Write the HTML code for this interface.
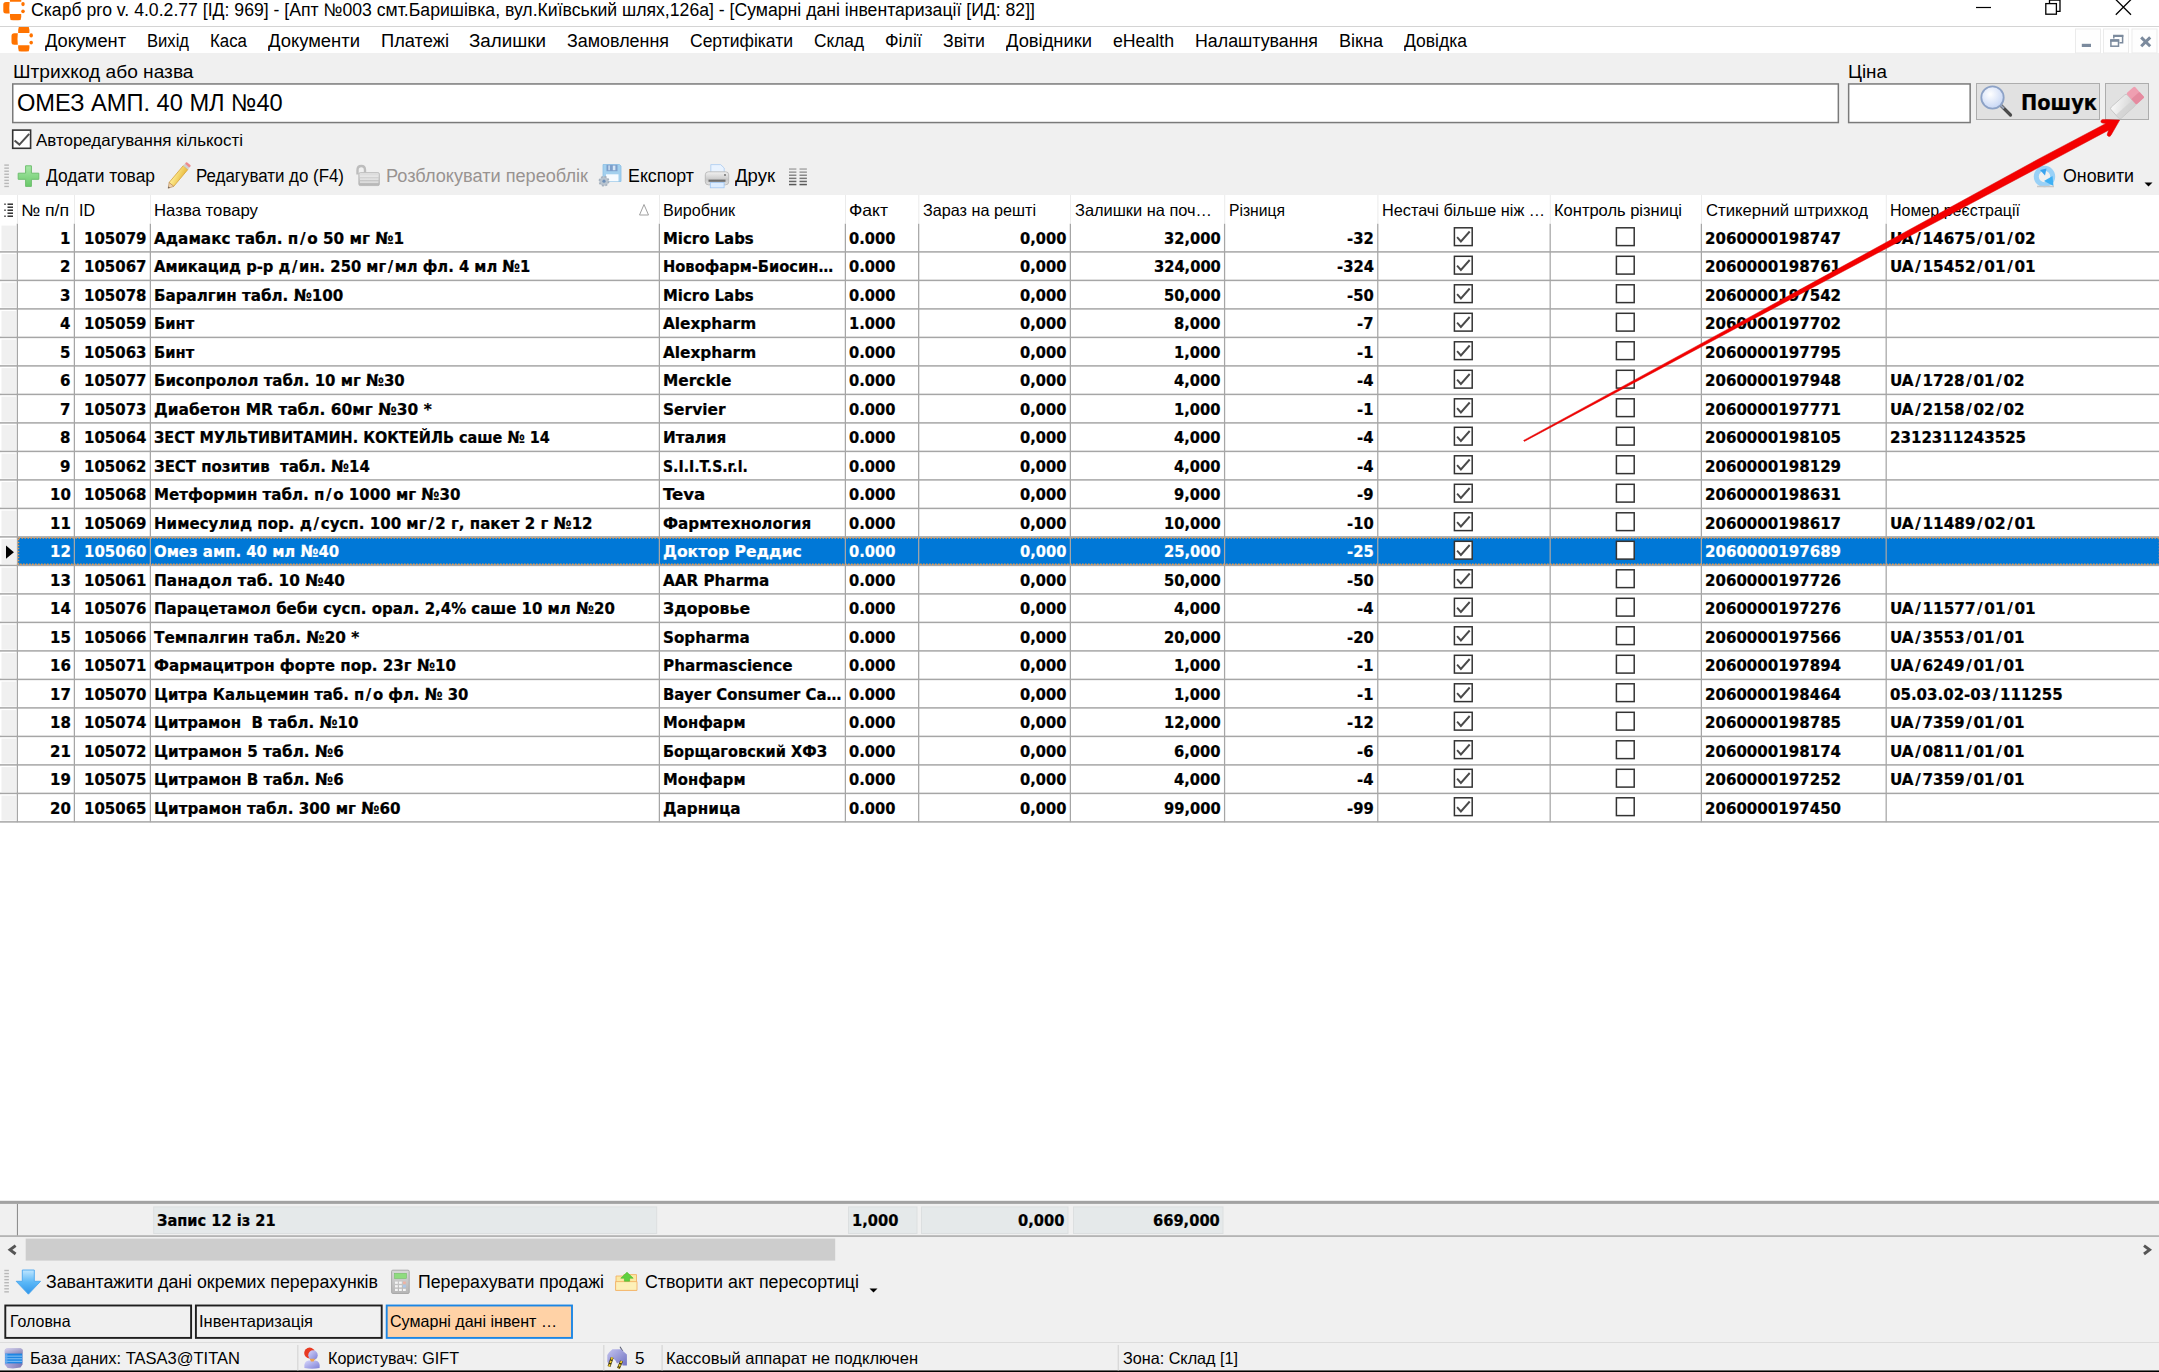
<!DOCTYPE html>
<html lang="uk"><head><meta charset="utf-8"><title>Скарб pro</title><style>html,body{margin:0;padding:0;background:#f0f0f0;overflow:hidden}
#r{position:relative;width:2159px;height:1372px;overflow:hidden;background:#f0f0f0}
#r>div{position:absolute}
#r>svg{position:absolute;left:0;top:0}
.t{position:absolute;white-space:pre;transform-origin:0 0;}
.sl{padding:0 1.6px;font-weight:inherit}
.b{-webkit-text-stroke:0.22px currentColor}
</style></head><body><div id="r">
<div style="left:0px;top:0px;width:2159px;height:1372px;background:#f0f0f0;"></div>
<div style="left:0px;top:0px;width:2159px;height:26px;background:#ffffff;"></div>
<div style="left:0px;top:26px;width:2159px;height:1px;background:#d4d4d4;"></div>
<div style="left:0px;top:27px;width:2159px;height:26px;background:#ffffff;"></div>
<div style="left:1976px;top:83px;width:124px;height:37px;background:#e1e1e1;border:1px solid #adadad;box-sizing:border-box;"></div>
<div style="left:2105px;top:83px;width:44px;height:37px;background:#e1e1e1;border:1px solid #adadad;box-sizing:border-box;"></div>
<div style="left:0px;top:195px;width:2159px;height:1006px;background:#ffffff;"></div>
<div style="left:0px;top:1204px;width:2159px;height:32px;background:#f0f0f0;"></div>
<div style="left:0px;top:1238px;width:2159px;height:24px;background:#f0f0f0;"></div>
<div style="left:0px;top:1342px;width:2159px;height:1px;background:#dcdcdc;"></div>
<svg width="2159" height="1372" viewBox="0 0 2159 1372"><rect x="12.75" y="83.95" width="1825.6" height="38.6" fill="#fff" stroke="#7a7a7a" stroke-width="1.5"/><rect x="1848.65" y="83.95" width="121.5" height="38.6" fill="#fff" stroke="#7a7a7a" stroke-width="1.5"/><rect x="12.7" y="130.1" width="17.9" height="18.2" fill="#fff" stroke="#333" stroke-width="1.6"/><path d="M14.6 140.4 L19.4 144.6 L29.2 133.8" fill="none" stroke="#505050" stroke-width="2"/><rect x="4.3" y="164.4" width="4.6" height="1.4" fill="#b8b8b8" /><rect x="4.3" y="167.45000000000002" width="4.6" height="1.4" fill="#b8b8b8" /><rect x="4.3" y="170.5" width="4.6" height="1.4" fill="#b8b8b8" /><rect x="4.3" y="173.55" width="4.6" height="1.4" fill="#b8b8b8" /><rect x="4.3" y="176.6" width="4.6" height="1.4" fill="#b8b8b8" /><rect x="4.3" y="179.65" width="4.6" height="1.4" fill="#b8b8b8" /><rect x="4.3" y="182.7" width="4.6" height="1.4" fill="#b8b8b8" /><rect x="4.3" y="185.75" width="4.6" height="1.4" fill="#b8b8b8" /><rect x="17" y="195" width="1" height="28.400000000000006" fill="#ebebeb" /><rect x="74" y="195" width="1" height="28.400000000000006" fill="#ebebeb" /><rect x="150" y="195" width="1" height="28.400000000000006" fill="#ebebeb" /><rect x="659" y="195" width="1" height="28.400000000000006" fill="#ebebeb" /><rect x="845" y="195" width="1" height="28.400000000000006" fill="#ebebeb" /><rect x="918.3" y="195" width="1" height="28.400000000000006" fill="#ebebeb" /><rect x="1070" y="195" width="1" height="28.400000000000006" fill="#ebebeb" /><rect x="1224.2" y="195" width="1" height="28.400000000000006" fill="#ebebeb" /><rect x="1377.4" y="195" width="1" height="28.400000000000006" fill="#ebebeb" /><rect x="1549.8" y="195" width="1" height="28.400000000000006" fill="#ebebeb" /><rect x="1701" y="195" width="1" height="28.400000000000006" fill="#ebebeb" /><rect x="1885.8" y="195" width="1" height="28.400000000000006" fill="#ebebeb" /><path d="M639.5 215 L644 204.5 L648.5 215 Z" fill="#fff" stroke="#a0a0a0" stroke-width="1"/><rect x="7.5" y="203.5" width="5.5" height="1.4" fill="#222" /><rect x="4.3" y="203.5" width="1.4" height="1.4" fill="#222" /><rect x="7.5" y="206.5" width="5.5" height="1.4" fill="#222" /><rect x="7.5" y="209.5" width="5.5" height="1.4" fill="#222" /><rect x="4.3" y="209.5" width="1.4" height="1.4" fill="#222" /><rect x="7.5" y="212.5" width="5.5" height="1.4" fill="#222" /><rect x="7.5" y="215.5" width="5.5" height="1.4" fill="#222" /><rect x="4.3" y="215.5" width="1.4" height="1.4" fill="#222" /><rect x="18" y="537.5" width="2141" height="27.3" fill="#0078d7" /><rect x="1.5" y="225.6" width="14.7" height="24.9" fill="#f0f0f0" /><rect x="1.5" y="254.1" width="14.7" height="24.9" fill="#f0f0f0" /><rect x="1.5" y="282.59999999999997" width="14.7" height="24.9" fill="#f0f0f0" /><rect x="1.5" y="311.09999999999997" width="14.7" height="24.9" fill="#f0f0f0" /><rect x="1.5" y="339.59999999999997" width="14.7" height="24.9" fill="#f0f0f0" /><rect x="1.5" y="368.09999999999997" width="14.7" height="24.9" fill="#f0f0f0" /><rect x="1.5" y="396.59999999999997" width="14.7" height="24.9" fill="#f0f0f0" /><rect x="1.5" y="425.09999999999997" width="14.7" height="24.9" fill="#f0f0f0" /><rect x="1.5" y="453.59999999999997" width="14.7" height="24.9" fill="#f0f0f0" /><rect x="1.5" y="482.09999999999997" width="14.7" height="24.9" fill="#f0f0f0" /><rect x="1.5" y="510.59999999999997" width="14.7" height="24.9" fill="#f0f0f0" /><rect x="1.5" y="539.1" width="14.7" height="24.9" fill="#f0f0f0" /><rect x="1.5" y="567.6" width="14.7" height="24.9" fill="#f0f0f0" /><rect x="1.5" y="596.1" width="14.7" height="24.9" fill="#f0f0f0" /><rect x="1.5" y="624.6" width="14.7" height="24.9" fill="#f0f0f0" /><rect x="1.5" y="653.1" width="14.7" height="24.9" fill="#f0f0f0" /><rect x="1.5" y="681.6" width="14.7" height="24.9" fill="#f0f0f0" /><rect x="1.5" y="710.1" width="14.7" height="24.9" fill="#f0f0f0" /><rect x="1.5" y="738.6" width="14.7" height="24.9" fill="#f0f0f0" /><rect x="1.5" y="767.1" width="14.7" height="24.9" fill="#f0f0f0" /><rect x="1.5" y="795.6" width="14.7" height="24.9" fill="#f0f0f0" /><rect x="0" y="251.15" width="2159" height="1.5" fill="#a6a6a6" /><rect x="0" y="279.65" width="2159" height="1.5" fill="#a6a6a6" /><rect x="0" y="308.15" width="2159" height="1.5" fill="#a6a6a6" /><rect x="0" y="336.65" width="2159" height="1.5" fill="#a6a6a6" /><rect x="0" y="365.15" width="2159" height="1.5" fill="#a6a6a6" /><rect x="0" y="393.65" width="2159" height="1.5" fill="#a6a6a6" /><rect x="0" y="422.15" width="2159" height="1.5" fill="#a6a6a6" /><rect x="0" y="450.65" width="2159" height="1.5" fill="#a6a6a6" /><rect x="0" y="479.15" width="2159" height="1.5" fill="#a6a6a6" /><rect x="0" y="507.65" width="2159" height="1.5" fill="#a6a6a6" /><rect x="0" y="536.15" width="2159" height="1.5" fill="#a6a6a6" /><rect x="0" y="564.65" width="2159" height="1.5" fill="#a6a6a6" /><rect x="0" y="593.15" width="2159" height="1.5" fill="#a6a6a6" /><rect x="0" y="621.65" width="2159" height="1.5" fill="#a6a6a6" /><rect x="0" y="650.15" width="2159" height="1.5" fill="#a6a6a6" /><rect x="0" y="678.65" width="2159" height="1.5" fill="#a6a6a6" /><rect x="0" y="707.15" width="2159" height="1.5" fill="#a6a6a6" /><rect x="0" y="735.65" width="2159" height="1.5" fill="#a6a6a6" /><rect x="0" y="764.15" width="2159" height="1.5" fill="#a6a6a6" /><rect x="0" y="792.65" width="2159" height="1.5" fill="#a6a6a6" /><rect x="0" y="821.15" width="2159" height="1.5" fill="#a6a6a6" /><rect x="16.75" y="223.70000000000002" width="1.25" height="598.5" fill="#a6a6a6" /><rect x="73.75" y="223.70000000000002" width="1.25" height="598.5" fill="#a6a6a6" /><rect x="149.75" y="223.70000000000002" width="1.25" height="598.5" fill="#a6a6a6" /><rect x="658.75" y="223.70000000000002" width="1.25" height="598.5" fill="#a6a6a6" /><rect x="844.75" y="223.70000000000002" width="1.25" height="598.5" fill="#a6a6a6" /><rect x="918.05" y="223.70000000000002" width="1.25" height="598.5" fill="#a6a6a6" /><rect x="1069.75" y="223.70000000000002" width="1.25" height="598.5" fill="#a6a6a6" /><rect x="1223.95" y="223.70000000000002" width="1.25" height="598.5" fill="#a6a6a6" /><rect x="1377.15" y="223.70000000000002" width="1.25" height="598.5" fill="#a6a6a6" /><rect x="1549.55" y="223.70000000000002" width="1.25" height="598.5" fill="#a6a6a6" /><rect x="1700.75" y="223.70000000000002" width="1.25" height="598.5" fill="#a6a6a6" /><rect x="1885.55" y="223.70000000000002" width="1.25" height="598.5" fill="#a6a6a6" /><rect x="18.5" y="538.1" width="2141" height="26.1" fill="none" stroke="#ee9a4c" stroke-width="1.5" stroke-dasharray="1.5 1.5"/><path d="M6 545.6 L13.9 552.1999999999999 L6 558.8 Z" fill="#000"/><rect x="1454.3999999999999" y="227.8" width="17.8" height="17.8" fill="#fff" stroke="#333" stroke-width="1.5"/><path d="M1457.1 237.20000000000002 L1460.8999999999999 241.50000000000003 L1469.7 231.50000000000003" fill="none" stroke="#4a4a4a" stroke-width="1.9"/><rect x="1616.3999999999999" y="227.8" width="17.8" height="17.8" fill="#fff" stroke="#333" stroke-width="1.5"/><rect x="1454.3999999999999" y="256.3" width="17.8" height="17.8" fill="#fff" stroke="#333" stroke-width="1.5"/><path d="M1457.1 265.7 L1460.8999999999999 270.0 L1469.7 260.0" fill="none" stroke="#4a4a4a" stroke-width="1.9"/><rect x="1616.3999999999999" y="256.3" width="17.8" height="17.8" fill="#fff" stroke="#333" stroke-width="1.5"/><rect x="1454.3999999999999" y="284.8" width="17.8" height="17.8" fill="#fff" stroke="#333" stroke-width="1.5"/><path d="M1457.1 294.2 L1460.8999999999999 298.5 L1469.7 288.5" fill="none" stroke="#4a4a4a" stroke-width="1.9"/><rect x="1616.3999999999999" y="284.8" width="17.8" height="17.8" fill="#fff" stroke="#333" stroke-width="1.5"/><rect x="1454.3999999999999" y="313.3" width="17.8" height="17.8" fill="#fff" stroke="#333" stroke-width="1.5"/><path d="M1457.1 322.7 L1460.8999999999999 327.0 L1469.7 317.0" fill="none" stroke="#4a4a4a" stroke-width="1.9"/><rect x="1616.3999999999999" y="313.3" width="17.8" height="17.8" fill="#fff" stroke="#333" stroke-width="1.5"/><rect x="1454.3999999999999" y="341.8" width="17.8" height="17.8" fill="#fff" stroke="#333" stroke-width="1.5"/><path d="M1457.1 351.2 L1460.8999999999999 355.5 L1469.7 345.5" fill="none" stroke="#4a4a4a" stroke-width="1.9"/><rect x="1616.3999999999999" y="341.8" width="17.8" height="17.8" fill="#fff" stroke="#333" stroke-width="1.5"/><rect x="1454.3999999999999" y="370.3" width="17.8" height="17.8" fill="#fff" stroke="#333" stroke-width="1.5"/><path d="M1457.1 379.7 L1460.8999999999999 384.0 L1469.7 374.0" fill="none" stroke="#4a4a4a" stroke-width="1.9"/><rect x="1616.3999999999999" y="370.3" width="17.8" height="17.8" fill="#fff" stroke="#333" stroke-width="1.5"/><rect x="1454.3999999999999" y="398.8" width="17.8" height="17.8" fill="#fff" stroke="#333" stroke-width="1.5"/><path d="M1457.1 408.2 L1460.8999999999999 412.5 L1469.7 402.5" fill="none" stroke="#4a4a4a" stroke-width="1.9"/><rect x="1616.3999999999999" y="398.8" width="17.8" height="17.8" fill="#fff" stroke="#333" stroke-width="1.5"/><rect x="1454.3999999999999" y="427.3" width="17.8" height="17.8" fill="#fff" stroke="#333" stroke-width="1.5"/><path d="M1457.1 436.7 L1460.8999999999999 441.0 L1469.7 431.0" fill="none" stroke="#4a4a4a" stroke-width="1.9"/><rect x="1616.3999999999999" y="427.3" width="17.8" height="17.8" fill="#fff" stroke="#333" stroke-width="1.5"/><rect x="1454.3999999999999" y="455.8" width="17.8" height="17.8" fill="#fff" stroke="#333" stroke-width="1.5"/><path d="M1457.1 465.2 L1460.8999999999999 469.5 L1469.7 459.5" fill="none" stroke="#4a4a4a" stroke-width="1.9"/><rect x="1616.3999999999999" y="455.8" width="17.8" height="17.8" fill="#fff" stroke="#333" stroke-width="1.5"/><rect x="1454.3999999999999" y="484.3" width="17.8" height="17.8" fill="#fff" stroke="#333" stroke-width="1.5"/><path d="M1457.1 493.7 L1460.8999999999999 498.0 L1469.7 488.0" fill="none" stroke="#4a4a4a" stroke-width="1.9"/><rect x="1616.3999999999999" y="484.3" width="17.8" height="17.8" fill="#fff" stroke="#333" stroke-width="1.5"/><rect x="1454.3999999999999" y="512.8" width="17.8" height="17.8" fill="#fff" stroke="#333" stroke-width="1.5"/><path d="M1457.1 522.1999999999999 L1460.8999999999999 526.4999999999999 L1469.7 516.4999999999999" fill="none" stroke="#4a4a4a" stroke-width="1.9"/><rect x="1616.3999999999999" y="512.8" width="17.8" height="17.8" fill="#fff" stroke="#333" stroke-width="1.5"/><rect x="1454.3999999999999" y="541.3" width="17.8" height="17.8" fill="#fff" stroke="#333" stroke-width="1.5"/><path d="M1457.1 550.6999999999999 L1460.8999999999999 554.9999999999999 L1469.7 544.9999999999999" fill="none" stroke="#4a4a4a" stroke-width="1.9"/><rect x="1616.3999999999999" y="541.3" width="17.8" height="17.8" fill="#fff" stroke="#333" stroke-width="1.5"/><rect x="1454.3999999999999" y="569.8" width="17.8" height="17.8" fill="#fff" stroke="#333" stroke-width="1.5"/><path d="M1457.1 579.1999999999999 L1460.8999999999999 583.4999999999999 L1469.7 573.4999999999999" fill="none" stroke="#4a4a4a" stroke-width="1.9"/><rect x="1616.3999999999999" y="569.8" width="17.8" height="17.8" fill="#fff" stroke="#333" stroke-width="1.5"/><rect x="1454.3999999999999" y="598.3" width="17.8" height="17.8" fill="#fff" stroke="#333" stroke-width="1.5"/><path d="M1457.1 607.6999999999999 L1460.8999999999999 611.9999999999999 L1469.7 601.9999999999999" fill="none" stroke="#4a4a4a" stroke-width="1.9"/><rect x="1616.3999999999999" y="598.3" width="17.8" height="17.8" fill="#fff" stroke="#333" stroke-width="1.5"/><rect x="1454.3999999999999" y="626.8" width="17.8" height="17.8" fill="#fff" stroke="#333" stroke-width="1.5"/><path d="M1457.1 636.1999999999999 L1460.8999999999999 640.4999999999999 L1469.7 630.4999999999999" fill="none" stroke="#4a4a4a" stroke-width="1.9"/><rect x="1616.3999999999999" y="626.8" width="17.8" height="17.8" fill="#fff" stroke="#333" stroke-width="1.5"/><rect x="1454.3999999999999" y="655.3" width="17.8" height="17.8" fill="#fff" stroke="#333" stroke-width="1.5"/><path d="M1457.1 664.6999999999999 L1460.8999999999999 668.9999999999999 L1469.7 658.9999999999999" fill="none" stroke="#4a4a4a" stroke-width="1.9"/><rect x="1616.3999999999999" y="655.3" width="17.8" height="17.8" fill="#fff" stroke="#333" stroke-width="1.5"/><rect x="1454.3999999999999" y="683.8" width="17.8" height="17.8" fill="#fff" stroke="#333" stroke-width="1.5"/><path d="M1457.1 693.1999999999999 L1460.8999999999999 697.4999999999999 L1469.7 687.4999999999999" fill="none" stroke="#4a4a4a" stroke-width="1.9"/><rect x="1616.3999999999999" y="683.8" width="17.8" height="17.8" fill="#fff" stroke="#333" stroke-width="1.5"/><rect x="1454.3999999999999" y="712.3" width="17.8" height="17.8" fill="#fff" stroke="#333" stroke-width="1.5"/><path d="M1457.1 721.6999999999999 L1460.8999999999999 725.9999999999999 L1469.7 715.9999999999999" fill="none" stroke="#4a4a4a" stroke-width="1.9"/><rect x="1616.3999999999999" y="712.3" width="17.8" height="17.8" fill="#fff" stroke="#333" stroke-width="1.5"/><rect x="1454.3999999999999" y="740.8" width="17.8" height="17.8" fill="#fff" stroke="#333" stroke-width="1.5"/><path d="M1457.1 750.1999999999999 L1460.8999999999999 754.4999999999999 L1469.7 744.4999999999999" fill="none" stroke="#4a4a4a" stroke-width="1.9"/><rect x="1616.3999999999999" y="740.8" width="17.8" height="17.8" fill="#fff" stroke="#333" stroke-width="1.5"/><rect x="1454.3999999999999" y="769.3" width="17.8" height="17.8" fill="#fff" stroke="#333" stroke-width="1.5"/><path d="M1457.1 778.6999999999999 L1460.8999999999999 782.9999999999999 L1469.7 772.9999999999999" fill="none" stroke="#4a4a4a" stroke-width="1.9"/><rect x="1616.3999999999999" y="769.3" width="17.8" height="17.8" fill="#fff" stroke="#333" stroke-width="1.5"/><rect x="1454.3999999999999" y="797.8" width="17.8" height="17.8" fill="#fff" stroke="#333" stroke-width="1.5"/><path d="M1457.1 807.1999999999999 L1460.8999999999999 811.4999999999999 L1469.7 801.4999999999999" fill="none" stroke="#4a4a4a" stroke-width="1.9"/><rect x="1616.3999999999999" y="797.8" width="17.8" height="17.8" fill="#fff" stroke="#333" stroke-width="1.5"/><rect x="0" y="1200.8" width="2159" height="3.1" fill="#a2a2a2" /><rect x="0" y="1235.2" width="2159" height="1.8" fill="#b4b4b4" /><rect x="16.9" y="1203.9" width="1.1" height="31.5" fill="#8f8f8f" /><rect x="153.7" y="1206.9" width="503" height="26.6" fill="#e5e9ea" stroke="#dcdfe0" stroke-width="1"/><rect x="848.5" y="1206.9" width="68.5" height="26.6" fill="#e5e9ea" stroke="#dcdfe0" stroke-width="1"/><rect x="921.5" y="1206.9" width="146.5" height="26.6" fill="#e5e9ea" stroke="#dcdfe0" stroke-width="1"/><rect x="1073.5" y="1206.9" width="149.5" height="26.6" fill="#e5e9ea" stroke="#dcdfe0" stroke-width="1"/><rect x="25.7" y="1238.6" width="809.5" height="22" fill="#cdcdcd" /><path d="M15.6 1245.6 L10 1249.8 L15.6 1254" fill="none" stroke="#555" stroke-width="2.9" stroke-linejoin="miter"/><path d="M2144 1245.6 L2149.6 1249.8 L2144 1254" fill="none" stroke="#555" stroke-width="2.9" stroke-linejoin="miter"/><rect x="4.3" y="1269.8" width="4.6" height="1.4" fill="#b8b8b8" /><rect x="4.3" y="1272.85" width="4.6" height="1.4" fill="#b8b8b8" /><rect x="4.3" y="1275.8999999999999" width="4.6" height="1.4" fill="#b8b8b8" /><rect x="4.3" y="1278.95" width="4.6" height="1.4" fill="#b8b8b8" /><rect x="4.3" y="1282.0" width="4.6" height="1.4" fill="#b8b8b8" /><rect x="4.3" y="1285.05" width="4.6" height="1.4" fill="#b8b8b8" /><rect x="4.3" y="1288.1" width="4.6" height="1.4" fill="#b8b8b8" /><rect x="4.3" y="1291.1499999999999" width="4.6" height="1.4" fill="#b8b8b8" /><path d="M869.5 1288.5 L877.5 1288.5 L873.5 1292.5 Z" fill="#000"/><path d="M2144.5 182.5 L2152.5 182.5 L2148.5 186.5 Z" fill="#000"/><rect x="5.3" y="1305.5" width="185.8" height="32.4" fill="#f0f0f0" stroke="#1e1e1e" stroke-width="1.9"/><rect x="195.9" y="1305.5" width="185.8" height="32.4" fill="#f0f0f0" stroke="#1e1e1e" stroke-width="1.9"/><rect x="386.7" y="1305.5" width="185.3" height="32.4" fill="#ffd2a6" stroke="#1c86e4" stroke-width="1.9"/><rect x="0" y="1370.45" width="2159" height="1.6" fill="#000" /><rect x="297.1" y="1345" width="1.4" height="25.4" fill="#d9d9d9" /><rect x="603.1" y="1345" width="1.4" height="25.4" fill="#d9d9d9" /><rect x="661.4" y="1345" width="1.4" height="25.4" fill="#d9d9d9" /><rect x="1117.6" y="1345" width="1.4" height="25.4" fill="#d9d9d9" /><defs>
<linearGradient id="gArrow" x1="0" y1="0" x2="0" y2="1"><stop offset="0" stop-color="#bfe6ff"/><stop offset="0.5" stop-color="#5bb8f7"/><stop offset="1" stop-color="#2f95ea"/></linearGradient>
<linearGradient id="gPlus" x1="0" y1="0" x2="0" y2="1"><stop offset="0" stop-color="#a8e8a8"/><stop offset="1" stop-color="#69c969"/></linearGradient>
<linearGradient id="gPen" x1="0" y1="0" x2="1" y2="1"><stop offset="0" stop-color="#fff09a"/><stop offset="1" stop-color="#e8b93a"/></linearGradient>
<radialGradient id="gLens" cx="0.4" cy="0.35" r="0.7"><stop offset="0" stop-color="#ffffff"/><stop offset="1" stop-color="#c4d4f4"/></radialGradient>
<linearGradient id="gEr" x1="0" y1="0" x2="1" y2="1"><stop offset="0" stop-color="#fafafa"/><stop offset="1" stop-color="#cfcfcf"/></linearGradient>
<linearGradient id="gPr" x1="0" y1="0" x2="0" y2="1"><stop offset="0" stop-color="#f2f2f2"/><stop offset="0.6" stop-color="#c9c9c9"/><stop offset="1" stop-color="#e2e2e2"/></linearGradient>
<linearGradient id="gDb" x1="0" y1="0" x2="1" y2="0"><stop offset="0" stop-color="#8f9bb5"/><stop offset="0.3" stop-color="#3f73d9"/><stop offset="1" stop-color="#86b0f2"/></linearGradient>
<linearGradient id="gCalc" x1="0" y1="0" x2="0" y2="1"><stop offset="0" stop-color="#d9d9d9"/><stop offset="1" stop-color="#b5b5b5"/></linearGradient>
<linearGradient id="gLock" x1="0" y1="0" x2="0" y2="1"><stop offset="0" stop-color="#e4e4e4"/><stop offset="1" stop-color="#b4b4b4"/></linearGradient>
<linearGradient id="gCol" x1="0" y1="0" x2="0" y2="1"><stop offset="0" stop-color="#a5a5a5"/><stop offset="1" stop-color="#4f4f4f"/></linearGradient>
</defs>
<g transform="translate(0 0)" fill="#ff7300"><path d="M10.6 -4.2 H20.6 Q21.6 -1 21.2 1.8 H10 Q9.6 -1 10.6 -4.2Z"/><path d="M6 2 H9.6 Q9 7.7 9.6 13.5 H6 Q3.3 13.5 3.3 11 V4.6 Q3.3 2 6 2Z"/><path d="M10 13.9 H21.2 Q21.6 17 20.6 20 Q15.6 20.6 10.6 20 Q9.6 17 10 13.9Z"/><ellipse cx="23" cy="4.1" rx="1.75" ry="2.1"/><ellipse cx="23" cy="11.3" rx="1.75" ry="1.9"/></g>
<g transform="translate(8.2 31.3)" fill="#ff7300"><path d="M10.6 -4.2 H20.6 Q21.6 -1 21.2 1.8 H10 Q9.6 -1 10.6 -4.2Z"/><path d="M6 2 H9.6 Q9 7.7 9.6 13.5 H6 Q3.3 13.5 3.3 11 V4.6 Q3.3 2 6 2Z"/><path d="M10 13.9 H21.2 Q21.6 17 20.6 20 Q15.6 20.6 10.6 20 Q9.6 17 10 13.9Z"/><ellipse cx="23" cy="4.1" rx="1.75" ry="2.1"/><ellipse cx="23" cy="11.3" rx="1.75" ry="1.9"/></g>
<path d="M1976 7.5 H1991" stroke="#000" stroke-width="1.2" fill="none"/>
<path d="M2049.5 3.5 V0 H2060 V11.3 H2056.8" stroke="#000" stroke-width="1.3" fill="none"/>
<rect x="2045.8" y="3.6" width="10.6" height="10.6" stroke="#000" stroke-width="1.3" fill="none"/>
<path d="M2115.8 -0.5 L2131 14.7 M2131 -0.5 L2115.8 14.7" stroke="#000" stroke-width="1.3" fill="none"/>
<rect x="2075.5" y="29" width="25" height="24" fill="#fefefe" stroke="#ebebeb" stroke-width="1"/>
<rect x="2103.5" y="29" width="25" height="24" fill="#fefefe" stroke="#ebebeb" stroke-width="1"/>
<rect x="2132" y="29" width="25" height="24" fill="#fefefe" stroke="#ebebeb" stroke-width="1"/>
<rect x="2081.8" y="43.8" width="9.2" height="3.2" fill="#7b8a9d"/>
<path d="M2113.8 38.6 V35.6 H2122.6 V42.8 H2119.4" stroke="#7b8a9d" stroke-width="1.5" fill="none"/><rect x="2113.8" y="35" width="9.5" height="2" fill="#7b8a9d"/>
<rect x="2110.9" y="40.2" width="7.6" height="6" stroke="#7b8a9d" stroke-width="1.5" fill="none"/><rect x="2110.2" y="39.2" width="9" height="2.6" fill="#7b8a9d"/>
<path d="M2141.2 37.4 L2150.2 46.2 M2150.2 37.4 L2141.2 46.2" stroke="#7b8a9d" stroke-width="3" fill="none"/>
<path d="M2000.5 105 L2010.5 115" stroke="#4a4a4a" stroke-width="3.2" stroke-linecap="round"/>
<path d="M1999.5 104 L2004 108.5" stroke="#9aa3b5" stroke-width="2.2"/>
<circle cx="1992.5" cy="97.5" r="11.2" fill="url(#gLens)" stroke="#8da2c6" stroke-width="1.8"/>
<g transform="translate(2127.5 102.5) rotate(-42)"><rect x="-17" y="-7.5" width="22" height="15" rx="2" fill="url(#gEr)" stroke="#c2c2c2" stroke-width="0.8"/><rect x="5" y="-7.5" width="11" height="15" rx="1.5" fill="#ef9fb1"/><rect x="5" y="0" width="11" height="7.5" rx="1" fill="#e58a9f"/><rect x="-17" y="1.5" width="22" height="6" fill="#d0d0d0" opacity="0.7"/></g>
<path d="M25.6 165.8 H31.4 V173.2 H38.8 V179.3 H31.4 V186.4 H25.6 V179.3 H18.2 V173.2 H25.6Z" fill="url(#gPlus)" stroke="#6fbf6f" stroke-width="1" stroke-linejoin="round"/>
<g transform="translate(178.5 176) rotate(-50)"><rect x="-11" y="-3" width="22" height="6" fill="url(#gPen)" stroke="#d9a640" stroke-width="0.8"/><path d="M-11 -3 L-16 0 L-11 3Z" fill="#f0d2a8" stroke="#b98a58" stroke-width="0.6"/><path d="M-14.5 -0.9 L-16 0 L-14.5 0.9Z" fill="#444"/><rect x="11" y="-3" width="3" height="6" fill="#cfcfcf"/><rect x="13.5" y="-3" width="2.5" height="6" rx="1" fill="#ee8a8a"/></g>
<path d="M357.5 174.5 V170 Q357.5 166 361.3 166 Q365 166 365 170 V172.5" fill="none" stroke="#bdbdbd" stroke-width="2.4"/>
<rect x="358.8" y="172.6" width="20.6" height="13" rx="1.5" fill="url(#gLock)" stroke="#b5b5b5" stroke-width="0.8"/>
<rect x="360" y="175.5" width="18.4" height="1.2" fill="#f2f2f2" opacity="0.8"/>
<rect x="360" y="178.5" width="18.4" height="1.2" fill="#f2f2f2" opacity="0.8"/>
<rect x="360" y="181.5" width="18.4" height="1.2" fill="#f2f2f2" opacity="0.8"/>
<path d="M603 164.5 H619.5 L621 166 V181.5 H603Z" fill="#a3d0ee" stroke="#8bbfe4" stroke-width="0.8"/>
<rect x="606.5" y="164.8" width="11" height="6.4" fill="#7d9fcb"/><rect x="608.3" y="165.4" width="1.6" height="4.8" fill="#c9dcf0"/><rect x="612.8" y="165.6" width="2.6" height="4.6" fill="#d5e6f6"/>
<rect x="606" y="174.3" width="12.5" height="7" fill="#f6fbff"/>
<circle cx="604" cy="181.2" r="4.6" fill="#b9c4cf" stroke="#a4b0bd" stroke-width="1.6" stroke-dasharray="2 1.6"/><circle cx="604" cy="181.2" r="1.6" fill="#6d8fb8"/>
<path d="M710.8 172.5 V164.6 H720.6 L724.2 168 V172.5Z" fill="#e9f3ff" stroke="#a9c9ef" stroke-width="0.8"/>
<rect x="705.3" y="171.8" width="23.4" height="13" rx="3" fill="url(#gPr)" stroke="#b3b3b3" stroke-width="0.8"/>
<rect x="708.5" y="179.6" width="17" height="2.2" fill="#6e6e6e"/>
<rect x="710.3" y="182.5" width="13.8" height="5.3" fill="#dcecff" stroke="#9fc6f2" stroke-width="0.8"/>
<circle cx="725" cy="175" r="0.9" fill="#666"/>
<rect x="789" y="168.30" width="7.4" height="1.5" fill="#a9a9a9"/><rect x="799.5" y="168.30" width="7.4" height="1.5" fill="#a9a9a9"/>
<rect x="789" y="171.40" width="7.4" height="1.5" fill="#999"/><rect x="799.5" y="171.40" width="7.4" height="1.5" fill="#999"/>
<rect x="789" y="174.50" width="7.4" height="1.5" fill="#888"/><rect x="799.5" y="174.50" width="7.4" height="1.5" fill="#888"/>
<rect x="789" y="177.60" width="7.4" height="1.5" fill="#777"/><rect x="799.5" y="177.60" width="7.4" height="1.5" fill="#777"/>
<rect x="789" y="180.70" width="7.4" height="1.5" fill="#666"/><rect x="799.5" y="180.70" width="7.4" height="1.5" fill="#666"/>
<rect x="789" y="183.80" width="7.4" height="1.5" fill="#585858"/><rect x="799.5" y="183.80" width="7.4" height="1.5" fill="#585858"/>
<circle cx="2044.5" cy="176.5" r="8.2" fill="none" stroke="#8fcdf7" stroke-width="5" opacity="0.9"/>
<path d="M2040 170 L2046.5 168.5 L2045 175.5Z" fill="#3aa3ee"/><path d="M2044 181 L2052.5 176 L2053.5 186 Z" fill="#3fb0f4"/>
<path d="M2037 186.5 H2054" stroke="#c8c8c8" stroke-width="1.5"/>
<path d="M22.3 1270 H34.3 V1281.3 H40.6 L28.4 1294.2 L16.2 1281.3 H22.3Z" fill="url(#gArrow)" stroke="#4aa6ee" stroke-width="0.9" stroke-linejoin="round"/>
<rect x="391.6" y="1270.2" width="17.6" height="23.3" rx="1.2" fill="url(#gCalc)" stroke="#a9a9a9" stroke-width="1"/>
<rect x="394.6" y="1273.4" width="11.8" height="5" fill="#8fdc7f" stroke="#74bf68" stroke-width="0.6"/>
<rect x="395" y="1281.6" width="2.8" height="2.2" fill="#f4f4f4"/>
<rect x="399" y="1281.6" width="2.8" height="2.2" fill="#f4f4f4"/>
<rect x="403" y="1281.6" width="2.8" height="2.2" fill="#f3b0a0"/>
<rect x="395" y="1285.1999999999998" width="2.8" height="2.2" fill="#f4f4f4"/>
<rect x="399" y="1285.1999999999998" width="2.8" height="2.2" fill="#f4f4f4"/>
<rect x="403" y="1285.1999999999998" width="2.8" height="2.2" fill="#a8c8f0"/>
<rect x="395" y="1288.8" width="2.8" height="2.2" fill="#f4f4f4"/>
<rect x="399" y="1288.8" width="2.8" height="2.2" fill="#f4f4f4"/>
<rect x="403" y="1288.8" width="2.8" height="2.2" fill="#f4f4f4"/>
<path d="M616 1276 H622.5 L624 1274.6 H636.5 V1290.2 H616Z" fill="#fbe9a2" stroke="#f2b266" stroke-width="0.9"/>
<path d="M615.6 1281.6 H637 V1290.4 H615.6Z" fill="#fdf0b8" stroke="#f2b266" stroke-width="0.9"/>
<path d="M627 1272.2 L633.2 1278.2 H629.6 V1281.2 H624.4 V1278.2 H620.8Z" fill="#5fd03f" stroke="#4cb82f" stroke-width="0.6"/>
<defs><linearGradient id="gDbT" x1="0" y1="0" x2="1" y2="1"><stop offset="0" stop-color="#d6d2f0"/><stop offset="1" stop-color="#8886b6"/></linearGradient><linearGradient id="gDbB" x1="0" y1="0" x2="1" y2="0"><stop offset="0" stop-color="#b0abdc"/><stop offset="1" stop-color="#7d78b4"/></linearGradient><linearGradient id="gUs" x1="0" y1="0" x2="1" y2="1"><stop offset="0" stop-color="#d6d6fb"/><stop offset="1" stop-color="#7c7ed6"/></linearGradient><linearGradient id="gPl" x1="0" y1="0" x2="1" y2="1"><stop offset="0" stop-color="#c4c4f0"/><stop offset="1" stop-color="#6f70c0"/></linearGradient></defs>
<path d="M4.8 1350 Q5 1348.4 7 1348.4 H20.5 Q22.4 1348.4 22.5 1350 V1364.5 L20.5 1367.6 Q14 1369 7.6 1368 L4.8 1364.5Z" fill="url(#gDbB)"/>
<path d="M4.8 1350 Q5 1348.4 7 1348.4 H20.5 Q22.4 1348.4 22.5 1350 V1353.6 H4.8Z" fill="url(#gDbT)"/>
<rect x="5.2" y="1353.6" width="17" height="9.8" fill="#1f86e2"/>
<rect x="5.2" y="1355.6" width="17" height="1.1" fill="#7fbdf3"/>
<rect x="5.2" y="1358.2" width="17" height="1.1" fill="#7fbdf3"/>
<rect x="5.2" y="1360.8" width="17" height="1.1" fill="#7fbdf3"/>
<rect x="5.2" y="1353.6" width="2.2" height="9.8" fill="#6aaef0" opacity="0.8"/>
<circle cx="309.6" cy="1353" r="5.4" fill="#e83a22"/>
<path d="M304.4 1368 Q303.6 1361.2 308.5 1360.6 H315.5 Q320.4 1361.2 319.6 1368 Q312 1369.6 304.4 1368Z" fill="url(#gUs)"/>
<ellipse cx="313" cy="1355.2" rx="4.7" ry="5" fill="url(#gUs)"/>
<path d="M309.6 1358.8 H315 L313.6 1361.6 H311Z" fill="#f0a24e"/>
<path d="M620 1346.8 L622.8 1351.2" stroke="#555a70" stroke-width="1.1"/>
<path d="M607.3 1362 V1355 L609 1352.4 L612.4 1349.3 H621 L626.9 1354.4 V1365.6 H622.5 L621.6 1361 L617 1363.5 L615.5 1360.5 L612.3 1357.4 L609.5 1364.5Z" fill="url(#gPl)"/>
<path d="M612.2 1357.4 L609 1366.6" stroke="#3a3210" stroke-width="3"/><path d="M612.2 1357.4 L609 1366.6" stroke="#f4cf30" stroke-width="1.8" stroke-dasharray="2.4 1.2"/>
<path d="M621.6 1361 L618.4 1368.3" stroke="#3a3210" stroke-width="3"/><path d="M621.6 1361 L618.4 1368.3" stroke="#f4cf30" stroke-width="1.8" stroke-dasharray="2.4 1.2"/></svg>
<span  class="t" style='left:31.00px;top:1.30px;font:normal 18px/1 "Liberation Sans", sans-serif;color:#000;transform:scaleX(0.9798);'>Скарб pro v. 4.0.2.77 [ІД: 969] - [Апт №003 смт.Баришівка, вул.Київський шлях,126а] - [Сумарні дані інвентаризації [ИД: 82]]</span>
<span  class="t" style='left:45.00px;top:32.20px;font:normal 18px/1 "Liberation Sans", sans-serif;color:#000;transform:scaleX(1.0143);'>Документ</span>
<span  class="t" style='left:147.00px;top:32.20px;font:normal 18px/1 "Liberation Sans", sans-serif;color:#000;transform:scaleX(0.9218);'>Вихід</span>
<span  class="t" style='left:210.00px;top:32.20px;font:normal 18px/1 "Liberation Sans", sans-serif;color:#000;transform:scaleX(0.9363);'>Каса</span>
<span  class="t" style='left:268.00px;top:32.20px;font:normal 18px/1 "Liberation Sans", sans-serif;color:#000;transform:scaleX(1.0233);'>Документи</span>
<span  class="t" style='left:381.00px;top:32.20px;font:normal 18px/1 "Liberation Sans", sans-serif;color:#000;transform:scaleX(1.0156);'>Платежі</span>
<span  class="t" style='left:469.00px;top:32.20px;font:normal 18px/1 "Liberation Sans", sans-serif;color:#000;transform:scaleX(1.0432);'>Залишки</span>
<span  class="t" style='left:567.00px;top:32.20px;font:normal 18px/1 "Liberation Sans", sans-serif;color:#000;transform:scaleX(0.9945);'>Замовлення</span>
<span  class="t" style='left:690.00px;top:32.20px;font:normal 18px/1 "Liberation Sans", sans-serif;color:#000;transform:scaleX(0.9724);'>Сертифікати</span>
<span  class="t" style='left:814.00px;top:32.20px;font:normal 18px/1 "Liberation Sans", sans-serif;color:#000;transform:scaleX(0.9598);'>Склад</span>
<span  class="t" style='left:885.00px;top:32.20px;font:normal 18px/1 "Liberation Sans", sans-serif;color:#000;transform:scaleX(0.9950);'>Філії</span>
<span  class="t" style='left:943.00px;top:32.20px;font:normal 18px/1 "Liberation Sans", sans-serif;color:#000;transform:scaleX(0.9828);'>Звіти</span>
<span  class="t" style='left:1006.00px;top:32.20px;font:normal 18px/1 "Liberation Sans", sans-serif;color:#000;transform:scaleX(1.0189);'>Довідники</span>
<span  class="t" style='left:1113.00px;top:32.20px;font:normal 18px/1 "Liberation Sans", sans-serif;color:#000;transform:scaleX(0.9831);'>eHealth</span>
<span  class="t" style='left:1195.00px;top:32.20px;font:normal 18px/1 "Liberation Sans", sans-serif;color:#000;transform:scaleX(0.9886);'>Налаштування</span>
<span  class="t" style='left:1339.00px;top:32.20px;font:normal 18px/1 "Liberation Sans", sans-serif;color:#000;transform:scaleX(1.0036);'>Вікна</span>
<span  class="t" style='left:1404.00px;top:32.20px;font:normal 18px/1 "Liberation Sans", sans-serif;color:#000;transform:scaleX(0.9730);'>Довідка</span>
<span  class="t" style='left:12.50px;top:64.30px;font:normal 17.5px/1 "Liberation Sans", sans-serif;color:#000;transform:scaleX(1.0939);'>Штрихкод або назва</span>
<span  class="t" style='left:17.30px;top:91.30px;font:normal 24.5px/1 "Liberation Sans", sans-serif;color:#000;transform:scaleX(0.9636);'>ОМЕЗ АМП. 40 МЛ №40</span>
<span  class="t" style='left:1848.00px;top:64.30px;font:normal 17.5px/1 "Liberation Sans", sans-serif;color:#000;transform:scaleX(1.0763);'>Ціна</span>
<span  class="t b" style='left:2021.00px;top:92.00px;font:bold 21.7px/1 "DejaVu Sans Condensed", "DejaVu Sans", sans-serif;color:#000;transform:scaleX(0.9943);'>Пошук</span>
<span  class="t" style='left:36.00px;top:132.00px;font:normal 16.5px/1 "Liberation Sans", sans-serif;color:#000;transform:scaleX(1.0263);'>Авторедагування кількості</span>
<span  class="t" style='left:46.00px;top:166.60px;font:normal 18px/1 "Liberation Sans", sans-serif;color:#000;transform:scaleX(0.9657);'>Додати товар</span>
<span  class="t" style='left:196.00px;top:166.60px;font:normal 18px/1 "Liberation Sans", sans-serif;color:#000;transform:scaleX(0.9385);'>Редагувати до (F4)</span>
<span  class="t" style='left:386.00px;top:166.60px;font:normal 18px/1 "Liberation Sans", sans-serif;color:#989391;transform:scaleX(1.0084);'>Розблокувати переоблік</span>
<span  class="t" style='left:628.00px;top:166.60px;font:normal 18px/1 "Liberation Sans", sans-serif;color:#000;transform:scaleX(0.9895);'>Експорт</span>
<span  class="t" style='left:735.00px;top:166.60px;font:normal 18px/1 "Liberation Sans", sans-serif;color:#000;transform:scaleX(1.0289);'>Друк</span>
<span  class="t" style='left:2063.00px;top:166.60px;font:normal 18px/1 "Liberation Sans", sans-serif;color:#000;transform:scaleX(0.9878);'>Оновити</span>
<span  class="t" style='left:21.40px;top:202.10px;font:normal 16.5px/1 "Liberation Sans", sans-serif;color:#000;transform:scaleX(1.0749);'>№ п/п</span>
<span  class="t" style='left:79.00px;top:202.10px;font:normal 16.5px/1 "Liberation Sans", sans-serif;color:#000;transform:scaleX(0.9697);'>ID</span>
<span  class="t" style='left:154.00px;top:202.10px;font:normal 16.5px/1 "Liberation Sans", sans-serif;color:#000;transform:scaleX(1.0159);'>Назва товару</span>
<span  class="t" style='left:663.00px;top:202.10px;font:normal 16.5px/1 "Liberation Sans", sans-serif;color:#000;transform:scaleX(0.9786);'>Виробник</span>
<span  class="t" style='left:849.00px;top:202.10px;font:normal 16.5px/1 "Liberation Sans", sans-serif;color:#000;transform:scaleX(1.0630);'>Факт</span>
<span  class="t" style='left:923.00px;top:202.10px;font:normal 16.5px/1 "Liberation Sans", sans-serif;color:#000;transform:scaleX(0.9813);'>Зараз на решті</span>
<span  class="t" style='left:1075.00px;top:202.10px;font:normal 16.5px/1 "Liberation Sans", sans-serif;color:#000;transform:scaleX(0.9930);'>Залишки на поч…</span>
<span  class="t" style='left:1229.00px;top:202.10px;font:normal 16.5px/1 "Liberation Sans", sans-serif;color:#000;transform:scaleX(0.9499);'>Різниця</span>
<span  class="t" style='left:1382.00px;top:202.10px;font:normal 16.5px/1 "Liberation Sans", sans-serif;color:#000;transform:scaleX(0.9842);'>Нестачі більше ніж …</span>
<span  class="t" style='left:1554.00px;top:202.10px;font:normal 16.5px/1 "Liberation Sans", sans-serif;color:#000;transform:scaleX(0.9991);'>Контроль різниці</span>
<span  class="t" style='left:1706.00px;top:202.10px;font:normal 16.5px/1 "Liberation Sans", sans-serif;color:#000;transform:scaleX(1.0133);'>Стикерний штрихкод</span>
<span  class="t" style='left:1890.00px;top:202.10px;font:normal 16.5px/1 "Liberation Sans", sans-serif;color:#000;transform:scaleX(0.9700);'>Номер реєстрації</span>
<span  class="t b" style='left:60.26px;top:230.70px;font:bold 16.5px/1 "DejaVu Sans Condensed", "DejaVu Sans", sans-serif;color:#000;transform:scaleX(1.0090);'>1</span>
<span  class="t b" style='left:84.06px;top:230.70px;font:bold 16.5px/1 "DejaVu Sans Condensed", "DejaVu Sans", sans-serif;color:#000;transform:scaleX(1.0090);'>105079</span>
<span  class="t b" style='left:154.20px;top:230.70px;font:bold 16.5px/1 "DejaVu Sans Condensed", "DejaVu Sans", sans-serif;color:#000;transform:scaleX(1.0268);'>Адамакс табл. п<b class="sl">/</b>о 50 мг №1</span>
<span  class="t b" style='left:662.60px;top:230.70px;font:bold 16.5px/1 "DejaVu Sans Condensed", "DejaVu Sans", sans-serif;color:#000;transform:scaleX(1.0045);'>Micro Labs</span>
<span  class="t b" style='left:849.00px;top:230.70px;font:bold 16.5px/1 "DejaVu Sans Condensed", "DejaVu Sans", sans-serif;color:#000;transform:scaleX(0.9879);'>0.000</span>
<span  class="t b" style='left:1020.09px;top:230.70px;font:bold 16.5px/1 "DejaVu Sans Condensed", "DejaVu Sans", sans-serif;color:#000;transform:scaleX(0.9880);'>0,000</span>
<span  class="t b" style='left:1163.99px;top:230.70px;font:bold 16.5px/1 "DejaVu Sans Condensed", "DejaVu Sans", sans-serif;color:#000;transform:scaleX(0.9880);'>32,000</span>
<span  class="t b" style='left:1346.91px;top:230.70px;font:bold 16.5px/1 "DejaVu Sans Condensed", "DejaVu Sans", sans-serif;color:#000;transform:scaleX(0.9950);'>-32</span>
<span  class="t b" style='left:1705.40px;top:230.70px;font:bold 16.5px/1 "DejaVu Sans Condensed", "DejaVu Sans", sans-serif;color:#000;transform:scaleX(1.0135);'>2060000198747</span>
<span  class="t b" style='left:1890.00px;top:230.70px;font:bold 16.5px/1 "DejaVu Sans Condensed", "DejaVu Sans", sans-serif;color:#000;transform:scaleX(1.0259);'>UA<b class="sl">/</b>14675<b class="sl">/</b>01<b class="sl">/</b>02</span>
<span  class="t b" style='left:60.26px;top:259.20px;font:bold 16.5px/1 "DejaVu Sans Condensed", "DejaVu Sans", sans-serif;color:#000;transform:scaleX(1.0090);'>2</span>
<span  class="t b" style='left:84.06px;top:259.20px;font:bold 16.5px/1 "DejaVu Sans Condensed", "DejaVu Sans", sans-serif;color:#000;transform:scaleX(1.0090);'>105067</span>
<span  class="t b" style='left:154.20px;top:259.20px;font:bold 16.5px/1 "DejaVu Sans Condensed", "DejaVu Sans", sans-serif;color:#000;transform:scaleX(0.9945);'>Амикацид р-р д<b class="sl">/</b>ин. 250 мг<b class="sl">/</b>мл фл. 4 мл №1</span>
<span  class="t b" style='left:662.60px;top:259.20px;font:bold 16.5px/1 "DejaVu Sans Condensed", "DejaVu Sans", sans-serif;color:#000;transform:scaleX(0.9883);'>Новофарм-Биосин…</span>
<span  class="t b" style='left:849.00px;top:259.20px;font:bold 16.5px/1 "DejaVu Sans Condensed", "DejaVu Sans", sans-serif;color:#000;transform:scaleX(0.9879);'>0.000</span>
<span  class="t b" style='left:1020.09px;top:259.20px;font:bold 16.5px/1 "DejaVu Sans Condensed", "DejaVu Sans", sans-serif;color:#000;transform:scaleX(0.9880);'>0,000</span>
<span  class="t b" style='left:1153.79px;top:259.20px;font:bold 16.5px/1 "DejaVu Sans Condensed", "DejaVu Sans", sans-serif;color:#000;transform:scaleX(0.9880);'>324,000</span>
<span  class="t b" style='left:1336.63px;top:259.20px;font:bold 16.5px/1 "DejaVu Sans Condensed", "DejaVu Sans", sans-serif;color:#000;transform:scaleX(0.9950);'>-324</span>
<span  class="t b" style='left:1705.40px;top:259.20px;font:bold 16.5px/1 "DejaVu Sans Condensed", "DejaVu Sans", sans-serif;color:#000;transform:scaleX(1.0135);'>2060000198761</span>
<span  class="t b" style='left:1890.00px;top:259.20px;font:bold 16.5px/1 "DejaVu Sans Condensed", "DejaVu Sans", sans-serif;color:#000;transform:scaleX(1.0259);'>UA<b class="sl">/</b>15452<b class="sl">/</b>01<b class="sl">/</b>01</span>
<span  class="t b" style='left:60.26px;top:287.70px;font:bold 16.5px/1 "DejaVu Sans Condensed", "DejaVu Sans", sans-serif;color:#000;transform:scaleX(1.0090);'>3</span>
<span  class="t b" style='left:84.06px;top:287.70px;font:bold 16.5px/1 "DejaVu Sans Condensed", "DejaVu Sans", sans-serif;color:#000;transform:scaleX(1.0090);'>105078</span>
<span  class="t b" style='left:154.20px;top:287.70px;font:bold 16.5px/1 "DejaVu Sans Condensed", "DejaVu Sans", sans-serif;color:#000;transform:scaleX(1.0185);'>Баралгин табл. №100</span>
<span  class="t b" style='left:662.60px;top:287.70px;font:bold 16.5px/1 "DejaVu Sans Condensed", "DejaVu Sans", sans-serif;color:#000;transform:scaleX(1.0045);'>Micro Labs</span>
<span  class="t b" style='left:849.00px;top:287.70px;font:bold 16.5px/1 "DejaVu Sans Condensed", "DejaVu Sans", sans-serif;color:#000;transform:scaleX(0.9879);'>0.000</span>
<span  class="t b" style='left:1020.09px;top:287.70px;font:bold 16.5px/1 "DejaVu Sans Condensed", "DejaVu Sans", sans-serif;color:#000;transform:scaleX(0.9880);'>0,000</span>
<span  class="t b" style='left:1163.99px;top:287.70px;font:bold 16.5px/1 "DejaVu Sans Condensed", "DejaVu Sans", sans-serif;color:#000;transform:scaleX(0.9880);'>50,000</span>
<span  class="t b" style='left:1346.91px;top:287.70px;font:bold 16.5px/1 "DejaVu Sans Condensed", "DejaVu Sans", sans-serif;color:#000;transform:scaleX(0.9950);'>-50</span>
<span  class="t b" style='left:1705.40px;top:287.70px;font:bold 16.5px/1 "DejaVu Sans Condensed", "DejaVu Sans", sans-serif;color:#000;transform:scaleX(1.0135);'>2060000197542</span>
<span  class="t b" style='left:60.26px;top:316.20px;font:bold 16.5px/1 "DejaVu Sans Condensed", "DejaVu Sans", sans-serif;color:#000;transform:scaleX(1.0090);'>4</span>
<span  class="t b" style='left:84.06px;top:316.20px;font:bold 16.5px/1 "DejaVu Sans Condensed", "DejaVu Sans", sans-serif;color:#000;transform:scaleX(1.0090);'>105059</span>
<span  class="t b" style='left:154.20px;top:316.20px;font:bold 16.5px/1 "DejaVu Sans Condensed", "DejaVu Sans", sans-serif;color:#000;transform:scaleX(0.9907);'>Бинт</span>
<span  class="t b" style='left:662.60px;top:316.20px;font:bold 16.5px/1 "DejaVu Sans Condensed", "DejaVu Sans", sans-serif;color:#000;transform:scaleX(1.0319);'>Alexpharm</span>
<span  class="t b" style='left:849.00px;top:316.20px;font:bold 16.5px/1 "DejaVu Sans Condensed", "DejaVu Sans", sans-serif;color:#000;transform:scaleX(0.9879);'>1.000</span>
<span  class="t b" style='left:1020.09px;top:316.20px;font:bold 16.5px/1 "DejaVu Sans Condensed", "DejaVu Sans", sans-serif;color:#000;transform:scaleX(0.9880);'>0,000</span>
<span  class="t b" style='left:1174.19px;top:316.20px;font:bold 16.5px/1 "DejaVu Sans Condensed", "DejaVu Sans", sans-serif;color:#000;transform:scaleX(0.9880);'>8,000</span>
<span  class="t b" style='left:1357.18px;top:316.20px;font:bold 16.5px/1 "DejaVu Sans Condensed", "DejaVu Sans", sans-serif;color:#000;transform:scaleX(0.9950);'>-7</span>
<span  class="t b" style='left:1705.40px;top:316.20px;font:bold 16.5px/1 "DejaVu Sans Condensed", "DejaVu Sans", sans-serif;color:#000;transform:scaleX(1.0135);'>2060000197702</span>
<span  class="t b" style='left:60.26px;top:344.70px;font:bold 16.5px/1 "DejaVu Sans Condensed", "DejaVu Sans", sans-serif;color:#000;transform:scaleX(1.0090);'>5</span>
<span  class="t b" style='left:84.06px;top:344.70px;font:bold 16.5px/1 "DejaVu Sans Condensed", "DejaVu Sans", sans-serif;color:#000;transform:scaleX(1.0090);'>105063</span>
<span  class="t b" style='left:154.20px;top:344.70px;font:bold 16.5px/1 "DejaVu Sans Condensed", "DejaVu Sans", sans-serif;color:#000;transform:scaleX(0.9907);'>Бинт</span>
<span  class="t b" style='left:662.60px;top:344.70px;font:bold 16.5px/1 "DejaVu Sans Condensed", "DejaVu Sans", sans-serif;color:#000;transform:scaleX(1.0319);'>Alexpharm</span>
<span  class="t b" style='left:849.00px;top:344.70px;font:bold 16.5px/1 "DejaVu Sans Condensed", "DejaVu Sans", sans-serif;color:#000;transform:scaleX(0.9879);'>0.000</span>
<span  class="t b" style='left:1020.09px;top:344.70px;font:bold 16.5px/1 "DejaVu Sans Condensed", "DejaVu Sans", sans-serif;color:#000;transform:scaleX(0.9880);'>0,000</span>
<span  class="t b" style='left:1174.19px;top:344.70px;font:bold 16.5px/1 "DejaVu Sans Condensed", "DejaVu Sans", sans-serif;color:#000;transform:scaleX(0.9880);'>1,000</span>
<span  class="t b" style='left:1357.18px;top:344.70px;font:bold 16.5px/1 "DejaVu Sans Condensed", "DejaVu Sans", sans-serif;color:#000;transform:scaleX(0.9950);'>-1</span>
<span  class="t b" style='left:1705.40px;top:344.70px;font:bold 16.5px/1 "DejaVu Sans Condensed", "DejaVu Sans", sans-serif;color:#000;transform:scaleX(1.0135);'>2060000197795</span>
<span  class="t b" style='left:60.26px;top:373.20px;font:bold 16.5px/1 "DejaVu Sans Condensed", "DejaVu Sans", sans-serif;color:#000;transform:scaleX(1.0090);'>6</span>
<span  class="t b" style='left:84.06px;top:373.20px;font:bold 16.5px/1 "DejaVu Sans Condensed", "DejaVu Sans", sans-serif;color:#000;transform:scaleX(1.0090);'>105077</span>
<span  class="t b" style='left:154.20px;top:373.20px;font:bold 16.5px/1 "DejaVu Sans Condensed", "DejaVu Sans", sans-serif;color:#000;transform:scaleX(1.0069);'>Бисопролол табл. 10 мг №30</span>
<span  class="t b" style='left:662.60px;top:373.20px;font:bold 16.5px/1 "DejaVu Sans Condensed", "DejaVu Sans", sans-serif;color:#000;transform:scaleX(1.0364);'>Merckle</span>
<span  class="t b" style='left:849.00px;top:373.20px;font:bold 16.5px/1 "DejaVu Sans Condensed", "DejaVu Sans", sans-serif;color:#000;transform:scaleX(0.9879);'>0.000</span>
<span  class="t b" style='left:1020.09px;top:373.20px;font:bold 16.5px/1 "DejaVu Sans Condensed", "DejaVu Sans", sans-serif;color:#000;transform:scaleX(0.9880);'>0,000</span>
<span  class="t b" style='left:1174.19px;top:373.20px;font:bold 16.5px/1 "DejaVu Sans Condensed", "DejaVu Sans", sans-serif;color:#000;transform:scaleX(0.9880);'>4,000</span>
<span  class="t b" style='left:1357.18px;top:373.20px;font:bold 16.5px/1 "DejaVu Sans Condensed", "DejaVu Sans", sans-serif;color:#000;transform:scaleX(0.9950);'>-4</span>
<span  class="t b" style='left:1705.40px;top:373.20px;font:bold 16.5px/1 "DejaVu Sans Condensed", "DejaVu Sans", sans-serif;color:#000;transform:scaleX(1.0135);'>2060000197948</span>
<span  class="t b" style='left:1890.00px;top:373.20px;font:bold 16.5px/1 "DejaVu Sans Condensed", "DejaVu Sans", sans-serif;color:#000;transform:scaleX(1.0228);'>UA<b class="sl">/</b>1728<b class="sl">/</b>01<b class="sl">/</b>02</span>
<span  class="t b" style='left:60.26px;top:401.70px;font:bold 16.5px/1 "DejaVu Sans Condensed", "DejaVu Sans", sans-serif;color:#000;transform:scaleX(1.0090);'>7</span>
<span  class="t b" style='left:84.06px;top:401.70px;font:bold 16.5px/1 "DejaVu Sans Condensed", "DejaVu Sans", sans-serif;color:#000;transform:scaleX(1.0090);'>105073</span>
<span  class="t b" style='left:154.20px;top:401.70px;font:bold 16.5px/1 "DejaVu Sans Condensed", "DejaVu Sans", sans-serif;color:#000;transform:scaleX(1.0381);'>Диабетон MR табл. 60мг №30 *</span>
<span  class="t b" style='left:662.60px;top:401.70px;font:bold 16.5px/1 "DejaVu Sans Condensed", "DejaVu Sans", sans-serif;color:#000;transform:scaleX(1.0373);'>Servier</span>
<span  class="t b" style='left:849.00px;top:401.70px;font:bold 16.5px/1 "DejaVu Sans Condensed", "DejaVu Sans", sans-serif;color:#000;transform:scaleX(0.9879);'>0.000</span>
<span  class="t b" style='left:1020.09px;top:401.70px;font:bold 16.5px/1 "DejaVu Sans Condensed", "DejaVu Sans", sans-serif;color:#000;transform:scaleX(0.9880);'>0,000</span>
<span  class="t b" style='left:1174.19px;top:401.70px;font:bold 16.5px/1 "DejaVu Sans Condensed", "DejaVu Sans", sans-serif;color:#000;transform:scaleX(0.9880);'>1,000</span>
<span  class="t b" style='left:1357.18px;top:401.70px;font:bold 16.5px/1 "DejaVu Sans Condensed", "DejaVu Sans", sans-serif;color:#000;transform:scaleX(0.9950);'>-1</span>
<span  class="t b" style='left:1705.40px;top:401.70px;font:bold 16.5px/1 "DejaVu Sans Condensed", "DejaVu Sans", sans-serif;color:#000;transform:scaleX(1.0135);'>2060000197771</span>
<span  class="t b" style='left:1890.00px;top:401.70px;font:bold 16.5px/1 "DejaVu Sans Condensed", "DejaVu Sans", sans-serif;color:#000;transform:scaleX(1.0228);'>UA<b class="sl">/</b>2158<b class="sl">/</b>02<b class="sl">/</b>02</span>
<span  class="t b" style='left:60.26px;top:430.20px;font:bold 16.5px/1 "DejaVu Sans Condensed", "DejaVu Sans", sans-serif;color:#000;transform:scaleX(1.0090);'>8</span>
<span  class="t b" style='left:84.06px;top:430.20px;font:bold 16.5px/1 "DejaVu Sans Condensed", "DejaVu Sans", sans-serif;color:#000;transform:scaleX(1.0090);'>105064</span>
<span  class="t b" style='left:154.20px;top:430.20px;font:bold 16.5px/1 "DejaVu Sans Condensed", "DejaVu Sans", sans-serif;color:#000;transform:scaleX(0.9728);'>ЗЕСТ МУЛЬТИВИТАМИН. КОКТЕЙЛЬ саше № 14</span>
<span  class="t b" style='left:662.60px;top:430.20px;font:bold 16.5px/1 "DejaVu Sans Condensed", "DejaVu Sans", sans-serif;color:#000;transform:scaleX(1.0249);'>Италия</span>
<span  class="t b" style='left:849.00px;top:430.20px;font:bold 16.5px/1 "DejaVu Sans Condensed", "DejaVu Sans", sans-serif;color:#000;transform:scaleX(0.9879);'>0.000</span>
<span  class="t b" style='left:1020.09px;top:430.20px;font:bold 16.5px/1 "DejaVu Sans Condensed", "DejaVu Sans", sans-serif;color:#000;transform:scaleX(0.9880);'>0,000</span>
<span  class="t b" style='left:1174.19px;top:430.20px;font:bold 16.5px/1 "DejaVu Sans Condensed", "DejaVu Sans", sans-serif;color:#000;transform:scaleX(0.9880);'>4,000</span>
<span  class="t b" style='left:1357.18px;top:430.20px;font:bold 16.5px/1 "DejaVu Sans Condensed", "DejaVu Sans", sans-serif;color:#000;transform:scaleX(0.9950);'>-4</span>
<span  class="t b" style='left:1705.40px;top:430.20px;font:bold 16.5px/1 "DejaVu Sans Condensed", "DejaVu Sans", sans-serif;color:#000;transform:scaleX(1.0135);'>2060000198105</span>
<span  class="t b" style='left:1890.00px;top:430.20px;font:bold 16.5px/1 "DejaVu Sans Condensed", "DejaVu Sans", sans-serif;color:#000;transform:scaleX(1.0135);'>2312311243525</span>
<span  class="t b" style='left:60.26px;top:458.70px;font:bold 16.5px/1 "DejaVu Sans Condensed", "DejaVu Sans", sans-serif;color:#000;transform:scaleX(1.0090);'>9</span>
<span  class="t b" style='left:84.06px;top:458.70px;font:bold 16.5px/1 "DejaVu Sans Condensed", "DejaVu Sans", sans-serif;color:#000;transform:scaleX(1.0090);'>105062</span>
<span  class="t b" style='left:154.20px;top:458.70px;font:bold 16.5px/1 "DejaVu Sans Condensed", "DejaVu Sans", sans-serif;color:#000;transform:scaleX(1.0076);'>ЗЕСТ позитив  табл. №14</span>
<span  class="t b" style='left:662.60px;top:458.70px;font:bold 16.5px/1 "DejaVu Sans Condensed", "DejaVu Sans", sans-serif;color:#000;transform:scaleX(0.9467);'>S.I.I.T.S.r.l.</span>
<span  class="t b" style='left:849.00px;top:458.70px;font:bold 16.5px/1 "DejaVu Sans Condensed", "DejaVu Sans", sans-serif;color:#000;transform:scaleX(0.9879);'>0.000</span>
<span  class="t b" style='left:1020.09px;top:458.70px;font:bold 16.5px/1 "DejaVu Sans Condensed", "DejaVu Sans", sans-serif;color:#000;transform:scaleX(0.9880);'>0,000</span>
<span  class="t b" style='left:1174.19px;top:458.70px;font:bold 16.5px/1 "DejaVu Sans Condensed", "DejaVu Sans", sans-serif;color:#000;transform:scaleX(0.9880);'>4,000</span>
<span  class="t b" style='left:1357.18px;top:458.70px;font:bold 16.5px/1 "DejaVu Sans Condensed", "DejaVu Sans", sans-serif;color:#000;transform:scaleX(0.9950);'>-4</span>
<span  class="t b" style='left:1705.40px;top:458.70px;font:bold 16.5px/1 "DejaVu Sans Condensed", "DejaVu Sans", sans-serif;color:#000;transform:scaleX(1.0135);'>2060000198129</span>
<span  class="t b" style='left:49.84px;top:487.20px;font:bold 16.5px/1 "DejaVu Sans Condensed", "DejaVu Sans", sans-serif;color:#000;transform:scaleX(1.0090);'>10</span>
<span  class="t b" style='left:84.06px;top:487.20px;font:bold 16.5px/1 "DejaVu Sans Condensed", "DejaVu Sans", sans-serif;color:#000;transform:scaleX(1.0090);'>105068</span>
<span  class="t b" style='left:154.20px;top:487.20px;font:bold 16.5px/1 "DejaVu Sans Condensed", "DejaVu Sans", sans-serif;color:#000;transform:scaleX(1.0148);'>Метформин табл. п<b class="sl">/</b>о 1000 мг №30</span>
<span  class="t b" style='left:662.60px;top:487.20px;font:bold 16.5px/1 "DejaVu Sans Condensed", "DejaVu Sans", sans-serif;color:#000;transform:scaleX(1.1193);'>Teva</span>
<span  class="t b" style='left:849.00px;top:487.20px;font:bold 16.5px/1 "DejaVu Sans Condensed", "DejaVu Sans", sans-serif;color:#000;transform:scaleX(0.9879);'>0.000</span>
<span  class="t b" style='left:1020.09px;top:487.20px;font:bold 16.5px/1 "DejaVu Sans Condensed", "DejaVu Sans", sans-serif;color:#000;transform:scaleX(0.9880);'>0,000</span>
<span  class="t b" style='left:1174.19px;top:487.20px;font:bold 16.5px/1 "DejaVu Sans Condensed", "DejaVu Sans", sans-serif;color:#000;transform:scaleX(0.9880);'>9,000</span>
<span  class="t b" style='left:1357.18px;top:487.20px;font:bold 16.5px/1 "DejaVu Sans Condensed", "DejaVu Sans", sans-serif;color:#000;transform:scaleX(0.9950);'>-9</span>
<span  class="t b" style='left:1705.40px;top:487.20px;font:bold 16.5px/1 "DejaVu Sans Condensed", "DejaVu Sans", sans-serif;color:#000;transform:scaleX(1.0135);'>2060000198631</span>
<span  class="t b" style='left:49.84px;top:515.70px;font:bold 16.5px/1 "DejaVu Sans Condensed", "DejaVu Sans", sans-serif;color:#000;transform:scaleX(1.0090);'>11</span>
<span  class="t b" style='left:84.06px;top:515.70px;font:bold 16.5px/1 "DejaVu Sans Condensed", "DejaVu Sans", sans-serif;color:#000;transform:scaleX(1.0090);'>105069</span>
<span  class="t b" style='left:154.20px;top:515.70px;font:bold 16.5px/1 "DejaVu Sans Condensed", "DejaVu Sans", sans-serif;color:#000;transform:scaleX(1.0138);'>Нимесулид пор. д<b class="sl">/</b>сусп. 100 мг<b class="sl">/</b>2 г, пакет 2 г №12</span>
<span  class="t b" style='left:662.60px;top:515.70px;font:bold 16.5px/1 "DejaVu Sans Condensed", "DejaVu Sans", sans-serif;color:#000;transform:scaleX(1.0223);'>Фармтехнология</span>
<span  class="t b" style='left:849.00px;top:515.70px;font:bold 16.5px/1 "DejaVu Sans Condensed", "DejaVu Sans", sans-serif;color:#000;transform:scaleX(0.9879);'>0.000</span>
<span  class="t b" style='left:1020.09px;top:515.70px;font:bold 16.5px/1 "DejaVu Sans Condensed", "DejaVu Sans", sans-serif;color:#000;transform:scaleX(0.9880);'>0,000</span>
<span  class="t b" style='left:1163.99px;top:515.70px;font:bold 16.5px/1 "DejaVu Sans Condensed", "DejaVu Sans", sans-serif;color:#000;transform:scaleX(0.9880);'>10,000</span>
<span  class="t b" style='left:1346.91px;top:515.70px;font:bold 16.5px/1 "DejaVu Sans Condensed", "DejaVu Sans", sans-serif;color:#000;transform:scaleX(0.9950);'>-10</span>
<span  class="t b" style='left:1705.40px;top:515.70px;font:bold 16.5px/1 "DejaVu Sans Condensed", "DejaVu Sans", sans-serif;color:#000;transform:scaleX(1.0135);'>2060000198617</span>
<span  class="t b" style='left:1890.00px;top:515.70px;font:bold 16.5px/1 "DejaVu Sans Condensed", "DejaVu Sans", sans-serif;color:#000;transform:scaleX(1.0259);'>UA<b class="sl">/</b>11489<b class="sl">/</b>02<b class="sl">/</b>01</span>
<span  class="t b" style='left:49.84px;top:544.20px;font:bold 16.5px/1 "DejaVu Sans Condensed", "DejaVu Sans", sans-serif;color:#fff;transform:scaleX(1.0090);'>12</span>
<span  class="t b" style='left:84.06px;top:544.20px;font:bold 16.5px/1 "DejaVu Sans Condensed", "DejaVu Sans", sans-serif;color:#fff;transform:scaleX(1.0090);'>105060</span>
<span  class="t b" style='left:154.20px;top:544.20px;font:bold 16.5px/1 "DejaVu Sans Condensed", "DejaVu Sans", sans-serif;color:#fff;transform:scaleX(1.0046);'>Омез амп. 40 мл №40</span>
<span  class="t b" style='left:662.60px;top:544.20px;font:bold 16.5px/1 "DejaVu Sans Condensed", "DejaVu Sans", sans-serif;color:#fff;transform:scaleX(1.0498);'>Доктор Реддис</span>
<span  class="t b" style='left:849.00px;top:544.20px;font:bold 16.5px/1 "DejaVu Sans Condensed", "DejaVu Sans", sans-serif;color:#fff;transform:scaleX(0.9879);'>0.000</span>
<span  class="t b" style='left:1020.09px;top:544.20px;font:bold 16.5px/1 "DejaVu Sans Condensed", "DejaVu Sans", sans-serif;color:#fff;transform:scaleX(0.9880);'>0,000</span>
<span  class="t b" style='left:1163.99px;top:544.20px;font:bold 16.5px/1 "DejaVu Sans Condensed", "DejaVu Sans", sans-serif;color:#fff;transform:scaleX(0.9880);'>25,000</span>
<span  class="t b" style='left:1346.91px;top:544.20px;font:bold 16.5px/1 "DejaVu Sans Condensed", "DejaVu Sans", sans-serif;color:#fff;transform:scaleX(0.9950);'>-25</span>
<span  class="t b" style='left:1705.40px;top:544.20px;font:bold 16.5px/1 "DejaVu Sans Condensed", "DejaVu Sans", sans-serif;color:#fff;transform:scaleX(1.0135);'>2060000197689</span>
<span  class="t b" style='left:49.84px;top:572.70px;font:bold 16.5px/1 "DejaVu Sans Condensed", "DejaVu Sans", sans-serif;color:#000;transform:scaleX(1.0090);'>13</span>
<span  class="t b" style='left:84.06px;top:572.70px;font:bold 16.5px/1 "DejaVu Sans Condensed", "DejaVu Sans", sans-serif;color:#000;transform:scaleX(1.0090);'>105061</span>
<span  class="t b" style='left:154.20px;top:572.70px;font:bold 16.5px/1 "DejaVu Sans Condensed", "DejaVu Sans", sans-serif;color:#000;transform:scaleX(1.0320);'>Панадол таб. 10 №40</span>
<span  class="t b" style='left:662.60px;top:572.70px;font:bold 16.5px/1 "DejaVu Sans Condensed", "DejaVu Sans", sans-serif;color:#000;transform:scaleX(1.0227);'>AAR Pharma</span>
<span  class="t b" style='left:849.00px;top:572.70px;font:bold 16.5px/1 "DejaVu Sans Condensed", "DejaVu Sans", sans-serif;color:#000;transform:scaleX(0.9879);'>0.000</span>
<span  class="t b" style='left:1020.09px;top:572.70px;font:bold 16.5px/1 "DejaVu Sans Condensed", "DejaVu Sans", sans-serif;color:#000;transform:scaleX(0.9880);'>0,000</span>
<span  class="t b" style='left:1163.99px;top:572.70px;font:bold 16.5px/1 "DejaVu Sans Condensed", "DejaVu Sans", sans-serif;color:#000;transform:scaleX(0.9880);'>50,000</span>
<span  class="t b" style='left:1346.91px;top:572.70px;font:bold 16.5px/1 "DejaVu Sans Condensed", "DejaVu Sans", sans-serif;color:#000;transform:scaleX(0.9950);'>-50</span>
<span  class="t b" style='left:1705.40px;top:572.70px;font:bold 16.5px/1 "DejaVu Sans Condensed", "DejaVu Sans", sans-serif;color:#000;transform:scaleX(1.0135);'>2060000197726</span>
<span  class="t b" style='left:49.84px;top:601.20px;font:bold 16.5px/1 "DejaVu Sans Condensed", "DejaVu Sans", sans-serif;color:#000;transform:scaleX(1.0090);'>14</span>
<span  class="t b" style='left:84.06px;top:601.20px;font:bold 16.5px/1 "DejaVu Sans Condensed", "DejaVu Sans", sans-serif;color:#000;transform:scaleX(1.0090);'>105076</span>
<span  class="t b" style='left:154.20px;top:601.20px;font:bold 16.5px/1 "DejaVu Sans Condensed", "DejaVu Sans", sans-serif;color:#000;transform:scaleX(1.0084);'>Парацетамол беби сусп. орал. 2,4% саше 10 мл №20</span>
<span  class="t b" style='left:662.60px;top:601.20px;font:bold 16.5px/1 "DejaVu Sans Condensed", "DejaVu Sans", sans-serif;color:#000;transform:scaleX(1.0568);'>Здоровье</span>
<span  class="t b" style='left:849.00px;top:601.20px;font:bold 16.5px/1 "DejaVu Sans Condensed", "DejaVu Sans", sans-serif;color:#000;transform:scaleX(0.9879);'>0.000</span>
<span  class="t b" style='left:1020.09px;top:601.20px;font:bold 16.5px/1 "DejaVu Sans Condensed", "DejaVu Sans", sans-serif;color:#000;transform:scaleX(0.9880);'>0,000</span>
<span  class="t b" style='left:1174.19px;top:601.20px;font:bold 16.5px/1 "DejaVu Sans Condensed", "DejaVu Sans", sans-serif;color:#000;transform:scaleX(0.9880);'>4,000</span>
<span  class="t b" style='left:1357.18px;top:601.20px;font:bold 16.5px/1 "DejaVu Sans Condensed", "DejaVu Sans", sans-serif;color:#000;transform:scaleX(0.9950);'>-4</span>
<span  class="t b" style='left:1705.40px;top:601.20px;font:bold 16.5px/1 "DejaVu Sans Condensed", "DejaVu Sans", sans-serif;color:#000;transform:scaleX(1.0135);'>2060000197276</span>
<span  class="t b" style='left:1890.00px;top:601.20px;font:bold 16.5px/1 "DejaVu Sans Condensed", "DejaVu Sans", sans-serif;color:#000;transform:scaleX(1.0259);'>UA<b class="sl">/</b>11577<b class="sl">/</b>01<b class="sl">/</b>01</span>
<span  class="t b" style='left:49.84px;top:629.70px;font:bold 16.5px/1 "DejaVu Sans Condensed", "DejaVu Sans", sans-serif;color:#000;transform:scaleX(1.0090);'>15</span>
<span  class="t b" style='left:84.06px;top:629.70px;font:bold 16.5px/1 "DejaVu Sans Condensed", "DejaVu Sans", sans-serif;color:#000;transform:scaleX(1.0090);'>105066</span>
<span  class="t b" style='left:154.20px;top:629.70px;font:bold 16.5px/1 "DejaVu Sans Condensed", "DejaVu Sans", sans-serif;color:#000;transform:scaleX(1.0308);'>Темпалгин табл. №20 *</span>
<span  class="t b" style='left:662.60px;top:629.70px;font:bold 16.5px/1 "DejaVu Sans Condensed", "DejaVu Sans", sans-serif;color:#000;transform:scaleX(1.0209);'>Sopharma</span>
<span  class="t b" style='left:849.00px;top:629.70px;font:bold 16.5px/1 "DejaVu Sans Condensed", "DejaVu Sans", sans-serif;color:#000;transform:scaleX(0.9879);'>0.000</span>
<span  class="t b" style='left:1020.09px;top:629.70px;font:bold 16.5px/1 "DejaVu Sans Condensed", "DejaVu Sans", sans-serif;color:#000;transform:scaleX(0.9880);'>0,000</span>
<span  class="t b" style='left:1163.99px;top:629.70px;font:bold 16.5px/1 "DejaVu Sans Condensed", "DejaVu Sans", sans-serif;color:#000;transform:scaleX(0.9880);'>20,000</span>
<span  class="t b" style='left:1346.91px;top:629.70px;font:bold 16.5px/1 "DejaVu Sans Condensed", "DejaVu Sans", sans-serif;color:#000;transform:scaleX(0.9950);'>-20</span>
<span  class="t b" style='left:1705.40px;top:629.70px;font:bold 16.5px/1 "DejaVu Sans Condensed", "DejaVu Sans", sans-serif;color:#000;transform:scaleX(1.0135);'>2060000197566</span>
<span  class="t b" style='left:1890.00px;top:629.70px;font:bold 16.5px/1 "DejaVu Sans Condensed", "DejaVu Sans", sans-serif;color:#000;transform:scaleX(1.0228);'>UA<b class="sl">/</b>3553<b class="sl">/</b>01<b class="sl">/</b>01</span>
<span  class="t b" style='left:49.84px;top:658.20px;font:bold 16.5px/1 "DejaVu Sans Condensed", "DejaVu Sans", sans-serif;color:#000;transform:scaleX(1.0090);'>16</span>
<span  class="t b" style='left:84.06px;top:658.20px;font:bold 16.5px/1 "DejaVu Sans Condensed", "DejaVu Sans", sans-serif;color:#000;transform:scaleX(1.0090);'>105071</span>
<span  class="t b" style='left:154.20px;top:658.20px;font:bold 16.5px/1 "DejaVu Sans Condensed", "DejaVu Sans", sans-serif;color:#000;transform:scaleX(1.0166);'>Фармацитрон форте пор. 23г №10</span>
<span  class="t b" style='left:662.60px;top:658.20px;font:bold 16.5px/1 "DejaVu Sans Condensed", "DejaVu Sans", sans-serif;color:#000;transform:scaleX(1.0245);'>Pharmascience</span>
<span  class="t b" style='left:849.00px;top:658.20px;font:bold 16.5px/1 "DejaVu Sans Condensed", "DejaVu Sans", sans-serif;color:#000;transform:scaleX(0.9879);'>0.000</span>
<span  class="t b" style='left:1020.09px;top:658.20px;font:bold 16.5px/1 "DejaVu Sans Condensed", "DejaVu Sans", sans-serif;color:#000;transform:scaleX(0.9880);'>0,000</span>
<span  class="t b" style='left:1174.19px;top:658.20px;font:bold 16.5px/1 "DejaVu Sans Condensed", "DejaVu Sans", sans-serif;color:#000;transform:scaleX(0.9880);'>1,000</span>
<span  class="t b" style='left:1357.18px;top:658.20px;font:bold 16.5px/1 "DejaVu Sans Condensed", "DejaVu Sans", sans-serif;color:#000;transform:scaleX(0.9950);'>-1</span>
<span  class="t b" style='left:1705.40px;top:658.20px;font:bold 16.5px/1 "DejaVu Sans Condensed", "DejaVu Sans", sans-serif;color:#000;transform:scaleX(1.0135);'>2060000197894</span>
<span  class="t b" style='left:1890.00px;top:658.20px;font:bold 16.5px/1 "DejaVu Sans Condensed", "DejaVu Sans", sans-serif;color:#000;transform:scaleX(1.0228);'>UA<b class="sl">/</b>6249<b class="sl">/</b>01<b class="sl">/</b>01</span>
<span  class="t b" style='left:49.84px;top:686.70px;font:bold 16.5px/1 "DejaVu Sans Condensed", "DejaVu Sans", sans-serif;color:#000;transform:scaleX(1.0090);'>17</span>
<span  class="t b" style='left:84.06px;top:686.70px;font:bold 16.5px/1 "DejaVu Sans Condensed", "DejaVu Sans", sans-serif;color:#000;transform:scaleX(1.0090);'>105070</span>
<span  class="t b" style='left:154.20px;top:686.70px;font:bold 16.5px/1 "DejaVu Sans Condensed", "DejaVu Sans", sans-serif;color:#000;'>Цитра Кальцемин таб. п<b class="sl">/</b>о фл. № 30</span>
<span  class="t b" style='left:662.60px;top:686.70px;font:bold 16.5px/1 "DejaVu Sans Condensed", "DejaVu Sans", sans-serif;color:#000;transform:scaleX(1.0032);'>Bayer Consumer Ca…</span>
<span  class="t b" style='left:849.00px;top:686.70px;font:bold 16.5px/1 "DejaVu Sans Condensed", "DejaVu Sans", sans-serif;color:#000;transform:scaleX(0.9879);'>0.000</span>
<span  class="t b" style='left:1020.09px;top:686.70px;font:bold 16.5px/1 "DejaVu Sans Condensed", "DejaVu Sans", sans-serif;color:#000;transform:scaleX(0.9880);'>0,000</span>
<span  class="t b" style='left:1174.19px;top:686.70px;font:bold 16.5px/1 "DejaVu Sans Condensed", "DejaVu Sans", sans-serif;color:#000;transform:scaleX(0.9880);'>1,000</span>
<span  class="t b" style='left:1357.18px;top:686.70px;font:bold 16.5px/1 "DejaVu Sans Condensed", "DejaVu Sans", sans-serif;color:#000;transform:scaleX(0.9950);'>-1</span>
<span  class="t b" style='left:1705.40px;top:686.70px;font:bold 16.5px/1 "DejaVu Sans Condensed", "DejaVu Sans", sans-serif;color:#000;transform:scaleX(1.0135);'>2060000198464</span>
<span  class="t b" style='left:1890.00px;top:686.70px;font:bold 16.5px/1 "DejaVu Sans Condensed", "DejaVu Sans", sans-serif;color:#000;transform:scaleX(1.0118);'>05.03.02-03<b class="sl">/</b>111255</span>
<span  class="t b" style='left:49.84px;top:715.20px;font:bold 16.5px/1 "DejaVu Sans Condensed", "DejaVu Sans", sans-serif;color:#000;transform:scaleX(1.0090);'>18</span>
<span  class="t b" style='left:84.06px;top:715.20px;font:bold 16.5px/1 "DejaVu Sans Condensed", "DejaVu Sans", sans-serif;color:#000;transform:scaleX(1.0090);'>105074</span>
<span  class="t b" style='left:154.20px;top:715.20px;font:bold 16.5px/1 "DejaVu Sans Condensed", "DejaVu Sans", sans-serif;color:#000;transform:scaleX(1.0123);'>Цитрамон  В табл. №10</span>
<span  class="t b" style='left:662.60px;top:715.20px;font:bold 16.5px/1 "DejaVu Sans Condensed", "DejaVu Sans", sans-serif;color:#000;transform:scaleX(0.9972);'>Монфарм</span>
<span  class="t b" style='left:849.00px;top:715.20px;font:bold 16.5px/1 "DejaVu Sans Condensed", "DejaVu Sans", sans-serif;color:#000;transform:scaleX(0.9879);'>0.000</span>
<span  class="t b" style='left:1020.09px;top:715.20px;font:bold 16.5px/1 "DejaVu Sans Condensed", "DejaVu Sans", sans-serif;color:#000;transform:scaleX(0.9880);'>0,000</span>
<span  class="t b" style='left:1163.99px;top:715.20px;font:bold 16.5px/1 "DejaVu Sans Condensed", "DejaVu Sans", sans-serif;color:#000;transform:scaleX(0.9880);'>12,000</span>
<span  class="t b" style='left:1346.91px;top:715.20px;font:bold 16.5px/1 "DejaVu Sans Condensed", "DejaVu Sans", sans-serif;color:#000;transform:scaleX(0.9950);'>-12</span>
<span  class="t b" style='left:1705.40px;top:715.20px;font:bold 16.5px/1 "DejaVu Sans Condensed", "DejaVu Sans", sans-serif;color:#000;transform:scaleX(1.0135);'>2060000198785</span>
<span  class="t b" style='left:1890.00px;top:715.20px;font:bold 16.5px/1 "DejaVu Sans Condensed", "DejaVu Sans", sans-serif;color:#000;transform:scaleX(1.0228);'>UA<b class="sl">/</b>7359<b class="sl">/</b>01<b class="sl">/</b>01</span>
<span  class="t b" style='left:49.84px;top:743.70px;font:bold 16.5px/1 "DejaVu Sans Condensed", "DejaVu Sans", sans-serif;color:#000;transform:scaleX(1.0090);'>21</span>
<span  class="t b" style='left:84.06px;top:743.70px;font:bold 16.5px/1 "DejaVu Sans Condensed", "DejaVu Sans", sans-serif;color:#000;transform:scaleX(1.0090);'>105072</span>
<span  class="t b" style='left:154.20px;top:743.70px;font:bold 16.5px/1 "DejaVu Sans Condensed", "DejaVu Sans", sans-serif;color:#000;transform:scaleX(1.0225);'>Цитрамон 5 табл. №6</span>
<span  class="t b" style='left:662.60px;top:743.70px;font:bold 16.5px/1 "DejaVu Sans Condensed", "DejaVu Sans", sans-serif;color:#000;transform:scaleX(0.9792);'>Борщаговский ХФЗ</span>
<span  class="t b" style='left:849.00px;top:743.70px;font:bold 16.5px/1 "DejaVu Sans Condensed", "DejaVu Sans", sans-serif;color:#000;transform:scaleX(0.9879);'>0.000</span>
<span  class="t b" style='left:1020.09px;top:743.70px;font:bold 16.5px/1 "DejaVu Sans Condensed", "DejaVu Sans", sans-serif;color:#000;transform:scaleX(0.9880);'>0,000</span>
<span  class="t b" style='left:1174.19px;top:743.70px;font:bold 16.5px/1 "DejaVu Sans Condensed", "DejaVu Sans", sans-serif;color:#000;transform:scaleX(0.9880);'>6,000</span>
<span  class="t b" style='left:1357.18px;top:743.70px;font:bold 16.5px/1 "DejaVu Sans Condensed", "DejaVu Sans", sans-serif;color:#000;transform:scaleX(0.9950);'>-6</span>
<span  class="t b" style='left:1705.40px;top:743.70px;font:bold 16.5px/1 "DejaVu Sans Condensed", "DejaVu Sans", sans-serif;color:#000;transform:scaleX(1.0135);'>2060000198174</span>
<span  class="t b" style='left:1890.00px;top:743.70px;font:bold 16.5px/1 "DejaVu Sans Condensed", "DejaVu Sans", sans-serif;color:#000;transform:scaleX(1.0228);'>UA<b class="sl">/</b>0811<b class="sl">/</b>01<b class="sl">/</b>01</span>
<span  class="t b" style='left:49.84px;top:772.20px;font:bold 16.5px/1 "DejaVu Sans Condensed", "DejaVu Sans", sans-serif;color:#000;transform:scaleX(1.0090);'>19</span>
<span  class="t b" style='left:84.06px;top:772.20px;font:bold 16.5px/1 "DejaVu Sans Condensed", "DejaVu Sans", sans-serif;color:#000;transform:scaleX(1.0090);'>105075</span>
<span  class="t b" style='left:154.20px;top:772.20px;font:bold 16.5px/1 "DejaVu Sans Condensed", "DejaVu Sans", sans-serif;color:#000;transform:scaleX(1.0171);'>Цитрамон В табл. №6</span>
<span  class="t b" style='left:662.60px;top:772.20px;font:bold 16.5px/1 "DejaVu Sans Condensed", "DejaVu Sans", sans-serif;color:#000;transform:scaleX(0.9972);'>Монфарм</span>
<span  class="t b" style='left:849.00px;top:772.20px;font:bold 16.5px/1 "DejaVu Sans Condensed", "DejaVu Sans", sans-serif;color:#000;transform:scaleX(0.9879);'>0.000</span>
<span  class="t b" style='left:1020.09px;top:772.20px;font:bold 16.5px/1 "DejaVu Sans Condensed", "DejaVu Sans", sans-serif;color:#000;transform:scaleX(0.9880);'>0,000</span>
<span  class="t b" style='left:1174.19px;top:772.20px;font:bold 16.5px/1 "DejaVu Sans Condensed", "DejaVu Sans", sans-serif;color:#000;transform:scaleX(0.9880);'>4,000</span>
<span  class="t b" style='left:1357.18px;top:772.20px;font:bold 16.5px/1 "DejaVu Sans Condensed", "DejaVu Sans", sans-serif;color:#000;transform:scaleX(0.9950);'>-4</span>
<span  class="t b" style='left:1705.40px;top:772.20px;font:bold 16.5px/1 "DejaVu Sans Condensed", "DejaVu Sans", sans-serif;color:#000;transform:scaleX(1.0135);'>2060000197252</span>
<span  class="t b" style='left:1890.00px;top:772.20px;font:bold 16.5px/1 "DejaVu Sans Condensed", "DejaVu Sans", sans-serif;color:#000;transform:scaleX(1.0228);'>UA<b class="sl">/</b>7359<b class="sl">/</b>01<b class="sl">/</b>01</span>
<span  class="t b" style='left:49.84px;top:800.70px;font:bold 16.5px/1 "DejaVu Sans Condensed", "DejaVu Sans", sans-serif;color:#000;transform:scaleX(1.0090);'>20</span>
<span  class="t b" style='left:84.06px;top:800.70px;font:bold 16.5px/1 "DejaVu Sans Condensed", "DejaVu Sans", sans-serif;color:#000;transform:scaleX(1.0090);'>105065</span>
<span  class="t b" style='left:154.20px;top:800.70px;font:bold 16.5px/1 "DejaVu Sans Condensed", "DejaVu Sans", sans-serif;color:#000;transform:scaleX(1.0204);'>Цитрамон табл. 300 мг №60</span>
<span  class="t b" style='left:662.60px;top:800.70px;font:bold 16.5px/1 "DejaVu Sans Condensed", "DejaVu Sans", sans-serif;color:#000;transform:scaleX(1.0259);'>Дарница</span>
<span  class="t b" style='left:849.00px;top:800.70px;font:bold 16.5px/1 "DejaVu Sans Condensed", "DejaVu Sans", sans-serif;color:#000;transform:scaleX(0.9879);'>0.000</span>
<span  class="t b" style='left:1020.09px;top:800.70px;font:bold 16.5px/1 "DejaVu Sans Condensed", "DejaVu Sans", sans-serif;color:#000;transform:scaleX(0.9880);'>0,000</span>
<span  class="t b" style='left:1163.99px;top:800.70px;font:bold 16.5px/1 "DejaVu Sans Condensed", "DejaVu Sans", sans-serif;color:#000;transform:scaleX(0.9880);'>99,000</span>
<span  class="t b" style='left:1346.91px;top:800.70px;font:bold 16.5px/1 "DejaVu Sans Condensed", "DejaVu Sans", sans-serif;color:#000;transform:scaleX(0.9950);'>-99</span>
<span  class="t b" style='left:1705.40px;top:800.70px;font:bold 16.5px/1 "DejaVu Sans Condensed", "DejaVu Sans", sans-serif;color:#000;transform:scaleX(1.0135);'>2060000197450</span>
<span  class="t b" style='left:157.00px;top:1213.40px;font:bold 16.5px/1 "DejaVu Sans Condensed", "DejaVu Sans", sans-serif;color:#000;transform:scaleX(0.9838);'>Запис 12 із 21</span>
<span  class="t b" style='left:851.60px;top:1213.40px;font:bold 16.5px/1 "DejaVu Sans Condensed", "DejaVu Sans", sans-serif;color:#000;transform:scaleX(0.9879);'>1,000</span>
<span  class="t b" style='left:1018.09px;top:1213.40px;font:bold 16.5px/1 "DejaVu Sans Condensed", "DejaVu Sans", sans-serif;color:#000;transform:scaleX(0.9880);'>0,000</span>
<span  class="t b" style='left:1152.69px;top:1213.40px;font:bold 16.5px/1 "DejaVu Sans Condensed", "DejaVu Sans", sans-serif;color:#000;transform:scaleX(0.9880);'>669,000</span>
<span  class="t" style='left:46.00px;top:1273.00px;font:normal 18px/1 "Liberation Sans", sans-serif;color:#000;transform:scaleX(0.9863);'>Завантажити дані окремих перерахунків</span>
<span  class="t" style='left:418.00px;top:1273.00px;font:normal 18px/1 "Liberation Sans", sans-serif;color:#000;transform:scaleX(0.9831);'>Перерахувати продажі</span>
<span  class="t" style='left:645.00px;top:1273.00px;font:normal 18px/1 "Liberation Sans", sans-serif;color:#000;transform:scaleX(0.9883);'>Створити акт пересортиці</span>
<span  class="t" style='left:9.50px;top:1313.00px;font:normal 16.5px/1 "Liberation Sans", sans-serif;color:#000;transform:scaleX(0.9649);'>Головна</span>
<span  class="t" style='left:199.00px;top:1313.00px;font:normal 16.5px/1 "Liberation Sans", sans-serif;color:#000;transform:scaleX(0.9973);'>Інвентаризація</span>
<span  class="t" style='left:390.00px;top:1313.00px;font:normal 16.5px/1 "Liberation Sans", sans-serif;color:#000;transform:scaleX(0.9738);'>Сумарні дані інвент …</span>
<span  class="t" style='left:30.00px;top:1350.00px;font:normal 16.5px/1 "Liberation Sans", sans-serif;color:#000;'>База даних: TASA3@TITAN</span>
<span  class="t" style='left:328.00px;top:1350.00px;font:normal 16.5px/1 "Liberation Sans", sans-serif;color:#000;transform:scaleX(0.9764);'>Користувач: GIFT</span>
<span  class="t" style='left:634.50px;top:1350.00px;font:normal 16.5px/1 "Liberation Sans", sans-serif;color:#000;transform:scaleX(1.0340);'>5</span>
<span  class="t" style='left:666.00px;top:1350.00px;font:normal 16.5px/1 "Liberation Sans", sans-serif;color:#000;transform:scaleX(1.0016);'>Кассовый аппарат не подключен</span>
<span  class="t" style='left:1123.00px;top:1350.00px;font:normal 16.5px/1 "Liberation Sans", sans-serif;color:#000;transform:scaleX(0.9805);'>Зона: Склад [1]</span>
<svg width="2159" height="1372" viewBox="0 0 2159 1372" style="pointer-events:none"><path d="M1523.6 440.4 L1729 328.4 L2040 158.2 L2105.8 123.5 L2102.5 123.1 Q2100.6 122.8 2100.9 121.2 Q2101.2 119.4 2103 119.4 L2119.7 120.1 L2111 135.2 Q2110 136.9 2108.4 136.2 Q2106.8 135.5 2107.3 134 L2108.6 130.2 L2040 166.8 L1729 332 L1524.4 441.4 Z" fill="#f40000" stroke="#d80a0a" stroke-width="0.5"/></svg>
</div></body></html>
